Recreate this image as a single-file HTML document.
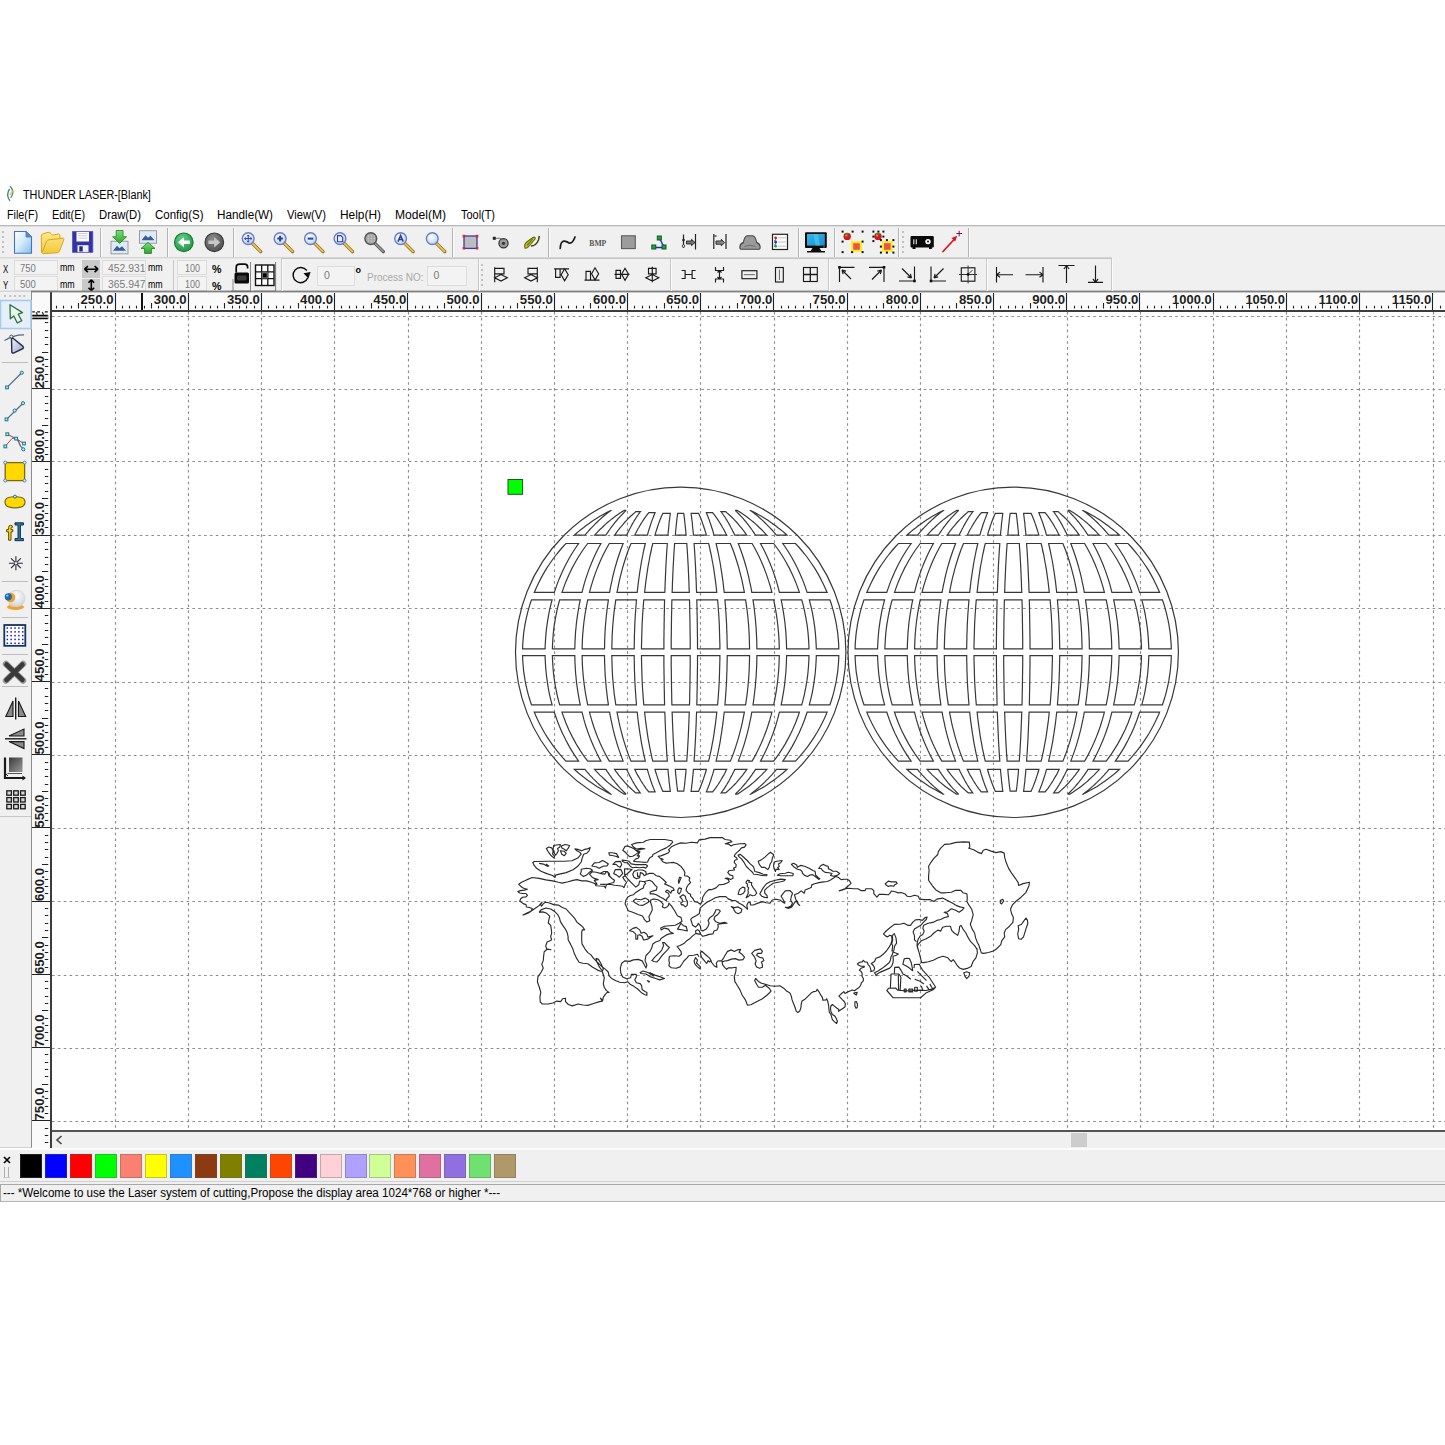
<!DOCTYPE html><html><head><meta charset="utf-8"><title>THUNDER LASER</title><style>
*{box-sizing:border-box;margin:0;padding:0}
html,body{width:1445px;height:1445px;background:#fff;overflow:hidden}
body{font-family:"Liberation Sans",sans-serif;font-size:12px;color:#000;position:relative}
.a{position:absolute}
.t{position:absolute;white-space:nowrap;line-height:1;transform-origin:0 50%}
.inp{position:absolute;background:#f3f3f3;border:1px solid #dcdcdc;color:#7a7a7a;font-size:11.5px;line-height:1;white-space:nowrap;overflow:hidden}
.sep{position:absolute;width:1px;background:#c9c9c9}
.hsep{position:absolute;height:1px;background:#c9c9c9}
svg{position:absolute;overflow:visible}
</style></head><body>
<div class="a" style="left:0;top:226px;width:1445px;height:66px;background:#f0f0f0"></div>
<div class="a" style="left:0;top:225px;width:1445px;height:1px;background:#b9b9b9"></div>
<div class="a" style="left:0;top:226px;width:1445px;height:1px;background:#dedede"></div>
<div class="a" style="left:0;top:291px;width:32px;height:857px;background:#f0f0f0;border-right:1px solid #8c8c8c;border-bottom:1px solid #d4d4d4"></div>
<div class="a" style="left:32px;top:292px;width:1413px;height:20px;background:#fafafa"></div>
<div class="a" style="left:32px;top:292px;width:19px;height:856px;background:#fafafa"></div>
<div class="a" style="left:50px;top:310px;width:1395px;height:2px;background:#3c3c3c"></div>
<div class="a" style="left:50px;top:292px;width:2px;height:856px;background:#3c3c3c"></div>
<div class="a" style="left:52px;top:1130px;width:1393px;height:2px;background:#555"></div>
<div class="a" style="left:52px;top:1132px;width:1393px;height:16px;background:#f0f0f0"></div><div class="a" style="left:0;top:1148px;width:1445px;height:1.5px;background:#fbfbfb"></div>
<div class="a" style="left:1071px;top:1133px;width:16px;height:14px;background:#cdcdcd"></div>
<svg style="left:55px;top:1135px" width="8" height="10"><path d="M6.5 1 L2 5 L6.5 9" fill="none" stroke="#444" stroke-width="1.6"/></svg>
<div class="a" style="left:0;top:1149.5px;width:1445px;height:34.5px;background:#f0f0f0"></div>
<div class="a" style="left:0;top:1181px;width:1445px;height:1px;background:#d0d0d0"></div>
<div class="a" style="left:0;top:1184px;width:1445px;height:18px;background:#f0f0f0;border-top:1px solid #a8a8a8;border-bottom:1px solid #b4b4b4;border-left:1px solid #a8a8a8"></div>
<div class="t" style="left:22.7px;top:188.7px;font-size:12px;color:#000;font-weight:normal;transform:scaleX(0.900);">THUNDER LASER-[Blank]</div>
<div class="t" style="left:7px;top:209.2px;font-size:12px;color:#000;font-weight:normal;transform:scaleX(0.895);">File(F)</div>
<div class="t" style="left:52px;top:209.2px;font-size:12px;color:#000;font-weight:normal;transform:scaleX(0.900);">Edit(E)</div>
<div class="t" style="left:99px;top:209.2px;font-size:12px;color:#000;font-weight:normal;transform:scaleX(0.940);">Draw(D)</div>
<div class="t" style="left:155px;top:209.2px;font-size:12px;color:#000;font-weight:normal;transform:scaleX(0.957);">Config(S)</div>
<div class="t" style="left:217px;top:209.2px;font-size:12px;color:#000;font-weight:normal;transform:scaleX(0.977);">Handle(W)</div>
<div class="t" style="left:287px;top:209.2px;font-size:12px;color:#000;font-weight:normal;transform:scaleX(0.933);">View(V)</div>
<div class="t" style="left:340px;top:209.2px;font-size:12px;color:#000;font-weight:normal;transform:scaleX(0.992);">Help(H)</div>
<div class="t" style="left:395px;top:209.2px;font-size:12px;color:#000;font-weight:normal;transform:scaleX(1.007);">Model(M)</div>
<div class="t" style="left:461px;top:209.2px;font-size:12px;color:#000;font-weight:normal;transform:scaleX(0.911);">Tool(T)</div>
<div class="t" style="left:2.5px;top:1187.2px;font-size:12px;color:#000;font-weight:normal;transform:scaleX(0.967);">--- *Welcome to use the Laser system of cutting,Propose the display area 1024*768 or higher *---</div>
<div class="a" style="left:20.0px;top:1154px;width:22px;height:23.5px;background:#000000;border:1px solid rgba(90,90,90,.35)"></div>
<div class="a" style="left:45.0px;top:1154px;width:22px;height:23.5px;background:#0000ff;border:1px solid rgba(90,90,90,.35)"></div>
<div class="a" style="left:69.9px;top:1154px;width:22px;height:23.5px;background:#ff0000;border:1px solid rgba(90,90,90,.35)"></div>
<div class="a" style="left:94.9px;top:1154px;width:22px;height:23.5px;background:#00ff00;border:1px solid rgba(90,90,90,.35)"></div>
<div class="a" style="left:119.8px;top:1154px;width:22px;height:23.5px;background:#fa8072;border:1px solid rgba(90,90,90,.35)"></div>
<div class="a" style="left:144.8px;top:1154px;width:22px;height:23.5px;background:#ffff00;border:1px solid rgba(90,90,90,.35)"></div>
<div class="a" style="left:169.8px;top:1154px;width:22px;height:23.5px;background:#1e90ff;border:1px solid rgba(90,90,90,.35)"></div>
<div class="a" style="left:194.7px;top:1154px;width:22px;height:23.5px;background:#8b3a12;border:1px solid rgba(90,90,90,.35)"></div>
<div class="a" style="left:219.7px;top:1154px;width:22px;height:23.5px;background:#808000;border:1px solid rgba(90,90,90,.35)"></div>
<div class="a" style="left:244.6px;top:1154px;width:22px;height:23.5px;background:#008060;border:1px solid rgba(90,90,90,.35)"></div>
<div class="a" style="left:269.6px;top:1154px;width:22px;height:23.5px;background:#ff4500;border:1px solid rgba(90,90,90,.35)"></div>
<div class="a" style="left:294.6px;top:1154px;width:22px;height:23.5px;background:#400080;border:1px solid rgba(90,90,90,.35)"></div>
<div class="a" style="left:319.5px;top:1154px;width:22px;height:23.5px;background:#ffd0d8;border:1px solid rgba(90,90,90,.35)"></div>
<div class="a" style="left:344.5px;top:1154px;width:22px;height:23.5px;background:#b0a0ff;border:1px solid rgba(90,90,90,.35)"></div>
<div class="a" style="left:369.4px;top:1154px;width:22px;height:23.5px;background:#d0ff98;border:1px solid rgba(90,90,90,.35)"></div>
<div class="a" style="left:394.4px;top:1154px;width:22px;height:23.5px;background:#ff9058;border:1px solid rgba(90,90,90,.35)"></div>
<div class="a" style="left:419.4px;top:1154px;width:22px;height:23.5px;background:#e070a0;border:1px solid rgba(90,90,90,.35)"></div>
<div class="a" style="left:444.3px;top:1154px;width:22px;height:23.5px;background:#9070e0;border:1px solid rgba(90,90,90,.35)"></div>
<div class="a" style="left:469.3px;top:1154px;width:22px;height:23.5px;background:#70e070;border:1px solid rgba(90,90,90,.35)"></div>
<div class="a" style="left:494.2px;top:1154px;width:22px;height:23.5px;background:#b09868;border:1px solid rgba(90,90,90,.35)"></div>
<svg style="left:3px;top:1156px" width="8" height="8"><path d="M1 1 L7 7 M7 1 L1 7" stroke="#000" stroke-width="1.7"/></svg>
<div class="a" style="left:4px;top:1167px;width:1px;height:10px;background:#b0b0b0"></div><div class="a" style="left:8px;top:1167px;width:1px;height:10px;background:#b0b0b0"></div><div class="a" style="left:3px;top:1177px;width:7px;height:1px;background:#c8c8c8"></div>
<div class="t" style="left:2.9px;top:264.2px;font-size:10.5px;color:#000;font-weight:normal;transform:scaleX(0.742);">X</div>
<div class="t" style="left:2.9px;top:279.5px;font-size:10.5px;color:#000;font-weight:normal;transform:scaleX(0.742);">Y</div>
<div class="inp" style="left:13.7px;top:260.2px;width:44.5px;height:15px"><div class="t" style="left:5.4px;top:1.9px;font-size:10.5px;transform:scaleX(0.902)">750</div></div>
<div class="inp" style="left:13.7px;top:276.2px;width:44.5px;height:15px"><div class="t" style="left:5.4px;top:2.2px;font-size:10.5px;transform:scaleX(0.902)">500</div></div>
<div class="t" style="left:59.6px;top:262.1px;font-size:10.5px;color:#000;font-weight:normal;transform:scaleX(0.840);">mm</div>
<div class="t" style="left:59.6px;top:278.7px;font-size:10.5px;color:#000;font-weight:normal;transform:scaleX(0.840);">mm</div>
<div class="a" style="left:82.3px;top:260.4px;width:17.4px;height:17.6px;background:#c9c9c9"></div>
<div class="a" style="left:82.3px;top:279px;width:17.4px;height:12.3px;background:#c9c9c9"></div>
<svg style="left:83px;top:260px" width="17" height="32"><path d="M1.5 9.2 H15 M1.5 9.2 l3.4 -3 M1.5 9.2 l3.4 3 M15 9.2 l-3.4 -3 M15 9.2 l-3.4 3" stroke="#000" stroke-width="1.6" fill="none"/><path d="M8.3 20 V30.5 M8.3 19.8 l-2.8 3 M8.3 19.8 l2.8 3 M8.3 30.8 l-2.8 -3 M8.3 30.8 l2.8 -3" stroke="#000" stroke-width="1.6" fill="none"/></svg>
<div class="inp" style="left:102.2px;top:260.2px;width:44px;height:15px"><div class="t" style="left:4.9px;top:1.9px;font-size:10.5px;transform:scaleX(0.985)">452.931</div></div>
<div class="inp" style="left:102.2px;top:276.2px;width:44px;height:15px"><div class="t" style="left:4.9px;top:2.2px;font-size:10.5px;transform:scaleX(0.985)">365.947</div></div>
<div class="t" style="left:147.8px;top:262.1px;font-size:10.5px;color:#000;font-weight:normal;transform:scaleX(0.840);">mm</div>
<div class="t" style="left:147.8px;top:278.7px;font-size:10.5px;color:#000;font-weight:normal;transform:scaleX(0.840);">mm</div>
<div class="sep" style="left:173px;top:260px;height:30px"></div>
<div class="inp" style="left:177px;top:260.2px;width:30px;height:15px"><div class="t" style="left:6.6px;top:1.9px;font-size:10.5px;transform:scaleX(0.856)">100</div></div>
<div class="inp" style="left:177px;top:276.2px;width:30px;height:15px"><div class="t" style="left:6.6px;top:2.2px;font-size:10.5px;transform:scaleX(0.856)">100</div></div>
<div class="t" style="left:212.3px;top:264.3px;font-size:11px;color:#000;font-weight:bold;transform:scaleX(0.971);">%</div>
<div class="t" style="left:212.3px;top:280.5px;font-size:11px;color:#000;font-weight:bold;transform:scaleX(0.971);">%</div>
<div class="inp" style="left:317px;top:265.5px;width:38px;height:20px"><div class="t" style="left:6px;top:3.4px;font-size:10.5px;transform:scaleX(1.000)">0</div></div>
<div class="t" style="left:355.5px;top:265.7px;font-size:9px;color:#000;font-weight:bold;transform:scaleX(1.000);">o</div>
<div class="t" style="left:367px;top:271.7px;font-size:11px;color:#a8a8a8;font-weight:normal;transform:scaleX(0.906);">Process NO:</div>
<div class="inp" style="left:426.5px;top:265.5px;width:40px;height:20px"><div class="t" style="left:6px;top:3.4px;font-size:10.5px;transform:scaleX(1.000)">0</div></div>
<svg style="left:0;top:180px" width="20" height="30"><path d="M9.6 9 Q5.6 14.5 9.9 20.8" fill="none" stroke="#3f7f86" stroke-width="1.3"/><path d="M10.2 6.3 Q15.4 12 10.6 17.8" fill="none" stroke="#4a86a8" stroke-width="1.3"/><path d="M9 14.3 L12 10.4 L15.6 10.8 L12.6 12.6 L11 15.5 Z" fill="#d9cc3a" opacity=".85"/></svg>
<svg style="left:0;top:0" width="1445" height="1445" viewBox="0 0 1445 1445"><path d="M115.5 312V1130M188.5 312V1130M261.5 312V1130M334.5 312V1130M408.5 312V1130M481.5 312V1130M554.5 312V1130M627.5 312V1130M700.5 312V1130M774.5 312V1130M847.5 312V1130M920.5 312V1130M993.5 312V1130M1067.5 312V1130M1140.5 312V1130M1213.5 312V1130M1286.5 312V1130M1359.5 312V1130M1433.5 312V1130M52 316.5H1445M52 389.5H1445M52 461.5H1445M52 535.5H1445M52 608.5H1445M52 682.5H1445M52 755.5H1445M52 828.5H1445M52 901.5H1445M52 975.5H1445M52 1048.5H1445M52 1121.5H1445" stroke="#8c8c8c" stroke-width="1.15" stroke-dasharray="2.6 3.25" fill="none"/><path d="M56.5 305.8V308.6M63.5 305.8V308.6M71.5 305.8V308.6M78.5 303V308.6M85.5 305.8V308.6M93.5 305.8V308.6M100.5 305.8V308.6M107.5 305.8V308.6M115.5 293V310M122.5 305.8V308.6M129.5 305.8V308.6M136.5 305.8V308.6M144.5 305.8V308.6M151.5 303V308.6M158.5 305.8V308.6M166.5 305.8V308.6M173.5 305.8V308.6M180.5 305.8V308.6M188.5 293V310M195.5 305.8V308.6M202.5 305.8V308.6M210.5 305.8V308.6M217.5 305.8V308.6M224.5 303V308.6M232.5 305.8V308.6M239.5 305.8V308.6M246.5 305.8V308.6M254.5 305.8V308.6M261.5 293V310M268.5 305.8V308.6M276.5 305.8V308.6M283.5 305.8V308.6M290.5 305.8V308.6M298.5 303V308.6M305.5 305.8V308.6M312.5 305.8V308.6M319.5 305.8V308.6M327.5 305.8V308.6M334.5 293V310M341.5 305.8V308.6M349.5 305.8V308.6M356.5 305.8V308.6M363.5 305.8V308.6M371.5 303V308.6M378.5 305.8V308.6M385.5 305.8V308.6M393.5 305.8V308.6M400.5 305.8V308.6M407.5 293V310M415.5 305.8V308.6M422.5 305.8V308.6M429.5 305.8V308.6M437.5 305.8V308.6M444.5 303V308.6M451.5 305.8V308.6M459.5 305.8V308.6M466.5 305.8V308.6M473.5 305.8V308.6M481.5 293V310M488.5 305.8V308.6M495.5 305.8V308.6M503.5 305.8V308.6M510.5 305.8V308.6M517.5 303V308.6M524.5 305.8V308.6M532.5 305.8V308.6M539.5 305.8V308.6M546.5 305.8V308.6M554.5 293V310M561.5 305.8V308.6M568.5 305.8V308.6M576.5 305.8V308.6M583.5 305.8V308.6M590.5 303V308.6M598.5 305.8V308.6M605.5 305.8V308.6M612.5 305.8V308.6M620.5 305.8V308.6M627.5 293V310M634.5 305.8V308.6M642.5 305.8V308.6M649.5 305.8V308.6M656.5 305.8V308.6M664.5 303V308.6M671.5 305.8V308.6M678.5 305.8V308.6M686.5 305.8V308.6M693.5 305.8V308.6M700.5 293V310M708.5 305.8V308.6M715.5 305.8V308.6M722.5 305.8V308.6M729.5 305.8V308.6M737.5 303V308.6M744.5 305.8V308.6M751.5 305.8V308.6M759.5 305.8V308.6M766.5 305.8V308.6M773.5 293V310M781.5 305.8V308.6M788.5 305.8V308.6M795.5 305.8V308.6M803.5 305.8V308.6M810.5 303V308.6M817.5 305.8V308.6M825.5 305.8V308.6M832.5 305.8V308.6M839.5 305.8V308.6M847.5 293V310M854.5 305.8V308.6M861.5 305.8V308.6M869.5 305.8V308.6M876.5 305.8V308.6M883.5 303V308.6M891.5 305.8V308.6M898.5 305.8V308.6M905.5 305.8V308.6M912.5 305.8V308.6M920.5 293V310M927.5 305.8V308.6M934.5 305.8V308.6M942.5 305.8V308.6M949.5 305.8V308.6M956.5 303V308.6M964.5 305.8V308.6M971.5 305.8V308.6M978.5 305.8V308.6M986.5 305.8V308.6M993.5 293V310M1000.5 305.8V308.6M1008.5 305.8V308.6M1015.5 305.8V308.6M1022.5 305.8V308.6M1030.5 303V308.6M1037.5 305.8V308.6M1044.5 305.8V308.6M1052.5 305.8V308.6M1059.5 305.8V308.6M1066.5 293V310M1074.5 305.8V308.6M1081.5 305.8V308.6M1088.5 305.8V308.6M1096.5 305.8V308.6M1103.5 303V308.6M1110.5 305.8V308.6M1117.5 305.8V308.6M1125.5 305.8V308.6M1132.5 305.8V308.6M1139.5 293V310M1147.5 305.8V308.6M1154.5 305.8V308.6M1161.5 305.8V308.6M1169.5 305.8V308.6M1176.5 303V308.6M1183.5 305.8V308.6M1191.5 305.8V308.6M1198.5 305.8V308.6M1205.5 305.8V308.6M1213.5 293V310M1220.5 305.8V308.6M1227.5 305.8V308.6M1235.5 305.8V308.6M1242.5 305.8V308.6M1249.5 303V308.6M1257.5 305.8V308.6M1264.5 305.8V308.6M1271.5 305.8V308.6M1279.5 305.8V308.6M1286.5 293V310M1293.5 305.8V308.6M1301.5 305.8V308.6M1308.5 305.8V308.6M1315.5 305.8V308.6M1322.5 303V308.6M1330.5 305.8V308.6M1337.5 305.8V308.6M1344.5 305.8V308.6M1352.5 305.8V308.6M1359.5 293V310M1366.5 305.8V308.6M1374.5 305.8V308.6M1381.5 305.8V308.6M1388.5 305.8V308.6M1396.5 303V308.6M1403.5 305.8V308.6M1410.5 305.8V308.6M1418.5 305.8V308.6M1425.5 305.8V308.6M1432.5 293V310M1440.5 305.8V308.6" stroke="#222" stroke-width="1.1" fill="none"/><path d="M44.8 322.5H48.2M44.8 330.5H48.2M44.8 337.5H48.2M44.8 344.5H48.2M42 352.5H48.2M44.8 359.5H48.2M44.8 366.5H48.2M44.8 374.5H48.2M44.8 381.5H48.2M32 388.5H50M44.8 396.5H48.2M44.8 403.5H48.2M44.8 410.5H48.2M44.8 418.5H48.2M42 425.5H48.2M44.8 432.5H48.2M44.8 440.5H48.2M44.8 447.5H48.2M44.8 454.5H48.2M32 461.5H50M44.8 469.5H48.2M44.8 476.5H48.2M44.8 483.5H48.2M44.8 491.5H48.2M42 498.5H48.2M44.8 505.5H48.2M44.8 513.5H48.2M44.8 520.5H48.2M44.8 527.5H48.2M32 535.5H50M44.8 542.5H48.2M44.8 549.5H48.2M44.8 557.5H48.2M44.8 564.5H48.2M42 571.5H48.2M44.8 579.5H48.2M44.8 586.5H48.2M44.8 593.5H48.2M44.8 601.5H48.2M32 608.5H50M44.8 615.5H48.2M44.8 623.5H48.2M44.8 630.5H48.2M44.8 637.5H48.2M42 644.5H48.2M44.8 652.5H48.2M44.8 659.5H48.2M44.8 666.5H48.2M44.8 674.5H48.2M32 681.5H50M44.8 688.5H48.2M44.8 696.5H48.2M44.8 703.5H48.2M44.8 710.5H48.2M42 718.5H48.2M44.8 725.5H48.2M44.8 732.5H48.2M44.8 740.5H48.2M44.8 747.5H48.2M32 754.5H50M44.8 762.5H48.2M44.8 769.5H48.2M44.8 776.5H48.2M44.8 784.5H48.2M42 791.5H48.2M44.8 798.5H48.2M44.8 805.5H48.2M44.8 813.5H48.2M44.8 820.5H48.2M32 827.5H50M44.8 835.5H48.2M44.8 842.5H48.2M44.8 849.5H48.2M44.8 857.5H48.2M42 864.5H48.2M44.8 871.5H48.2M44.8 879.5H48.2M44.8 886.5H48.2M44.8 893.5H48.2M32 901.5H50M44.8 908.5H48.2M44.8 915.5H48.2M44.8 923.5H48.2M44.8 930.5H48.2M42 937.5H48.2M44.8 945.5H48.2M44.8 952.5H48.2M44.8 959.5H48.2M44.8 967.5H48.2M32 974.5H50M44.8 981.5H48.2M44.8 988.5H48.2M44.8 996.5H48.2M44.8 1003.5H48.2M42 1010.5H48.2M44.8 1018.5H48.2M44.8 1025.5H48.2M44.8 1032.5H48.2M44.8 1040.5H48.2M32 1047.5H50M44.8 1054.5H48.2M44.8 1062.5H48.2M44.8 1069.5H48.2M44.8 1076.5H48.2M42 1084.5H48.2M44.8 1091.5H48.2M44.8 1098.5H48.2M44.8 1106.5H48.2M44.8 1113.5H48.2M32 1120.5H50M44.8 1128.5H48.2M44.8 1135.5H48.2M44.8 1142.5H48.2" stroke="#222" stroke-width="1.1" fill="none"/><path d="M142 293V310" stroke="#111" stroke-width="2"/><rect x="32.3" y="315.2" width="16.3" height="3.8" fill="#a0a0a0"/><path d="M32.3 311.8H34.8M37.2 311.8H40M44.8 311.8H47.8" stroke="#111" stroke-width="1.2"/><path d="M36.2 312.3L37.3 314.8M42.2 312L43.6 314.8" stroke="#333" stroke-width="1.3"/><path d="M32.3 315.5H47.8M32.3 318.6H47.8" stroke="#0a0a0a" stroke-width="1.3"/><text x="113.5" y="304.3" text-anchor="end" font-family="Liberation Sans" font-weight="bold" font-size="12.4" fill="#1e1e1e" textLength="33" lengthAdjust="spacingAndGlyphs">250.0</text><text x="186.7" y="304.3" text-anchor="end" font-family="Liberation Sans" font-weight="bold" font-size="12.4" fill="#1e1e1e" textLength="33" lengthAdjust="spacingAndGlyphs">300.0</text><text x="259.9" y="304.3" text-anchor="end" font-family="Liberation Sans" font-weight="bold" font-size="12.4" fill="#1e1e1e" textLength="33" lengthAdjust="spacingAndGlyphs">350.0</text><text x="333.1" y="304.3" text-anchor="end" font-family="Liberation Sans" font-weight="bold" font-size="12.4" fill="#1e1e1e" textLength="33" lengthAdjust="spacingAndGlyphs">400.0</text><text x="406.3" y="304.3" text-anchor="end" font-family="Liberation Sans" font-weight="bold" font-size="12.4" fill="#1e1e1e" textLength="33" lengthAdjust="spacingAndGlyphs">450.0</text><text x="479.5" y="304.3" text-anchor="end" font-family="Liberation Sans" font-weight="bold" font-size="12.4" fill="#1e1e1e" textLength="33" lengthAdjust="spacingAndGlyphs">500.0</text><text x="552.8" y="304.3" text-anchor="end" font-family="Liberation Sans" font-weight="bold" font-size="12.4" fill="#1e1e1e" textLength="33" lengthAdjust="spacingAndGlyphs">550.0</text><text x="626.0" y="304.3" text-anchor="end" font-family="Liberation Sans" font-weight="bold" font-size="12.4" fill="#1e1e1e" textLength="33" lengthAdjust="spacingAndGlyphs">600.0</text><text x="699.2" y="304.3" text-anchor="end" font-family="Liberation Sans" font-weight="bold" font-size="12.4" fill="#1e1e1e" textLength="33" lengthAdjust="spacingAndGlyphs">650.0</text><text x="772.4" y="304.3" text-anchor="end" font-family="Liberation Sans" font-weight="bold" font-size="12.4" fill="#1e1e1e" textLength="33" lengthAdjust="spacingAndGlyphs">700.0</text><text x="845.6" y="304.3" text-anchor="end" font-family="Liberation Sans" font-weight="bold" font-size="12.4" fill="#1e1e1e" textLength="33" lengthAdjust="spacingAndGlyphs">750.0</text><text x="918.8" y="304.3" text-anchor="end" font-family="Liberation Sans" font-weight="bold" font-size="12.4" fill="#1e1e1e" textLength="33" lengthAdjust="spacingAndGlyphs">800.0</text><text x="992.0" y="304.3" text-anchor="end" font-family="Liberation Sans" font-weight="bold" font-size="12.4" fill="#1e1e1e" textLength="33" lengthAdjust="spacingAndGlyphs">850.0</text><text x="1065.2" y="304.3" text-anchor="end" font-family="Liberation Sans" font-weight="bold" font-size="12.4" fill="#1e1e1e" textLength="33" lengthAdjust="spacingAndGlyphs">900.0</text><text x="1138.4" y="304.3" text-anchor="end" font-family="Liberation Sans" font-weight="bold" font-size="12.4" fill="#1e1e1e" textLength="33" lengthAdjust="spacingAndGlyphs">950.0</text><text x="1211.6" y="304.3" text-anchor="end" font-family="Liberation Sans" font-weight="bold" font-size="12.4" fill="#1e1e1e" textLength="39.5" lengthAdjust="spacingAndGlyphs">1000.0</text><text x="1284.9" y="304.3" text-anchor="end" font-family="Liberation Sans" font-weight="bold" font-size="12.4" fill="#1e1e1e" textLength="39.5" lengthAdjust="spacingAndGlyphs">1050.0</text><text x="1358.1" y="304.3" text-anchor="end" font-family="Liberation Sans" font-weight="bold" font-size="12.4" fill="#1e1e1e" textLength="39.5" lengthAdjust="spacingAndGlyphs">1100.0</text><text x="1431.3" y="304.3" text-anchor="end" font-family="Liberation Sans" font-weight="bold" font-size="12.4" fill="#1e1e1e" textLength="39.5" lengthAdjust="spacingAndGlyphs">1150.0</text><text transform="translate(43.6 388.6) rotate(-90)" text-anchor="start" font-family="Liberation Sans" font-weight="bold" font-size="12.4" fill="#1e1e1e" textLength="33" lengthAdjust="spacingAndGlyphs">250.0</text><text transform="translate(43.6 461.8) rotate(-90)" text-anchor="start" font-family="Liberation Sans" font-weight="bold" font-size="12.4" fill="#1e1e1e" textLength="33" lengthAdjust="spacingAndGlyphs">300.0</text><text transform="translate(43.6 535.0) rotate(-90)" text-anchor="start" font-family="Liberation Sans" font-weight="bold" font-size="12.4" fill="#1e1e1e" textLength="33" lengthAdjust="spacingAndGlyphs">350.0</text><text transform="translate(43.6 608.2) rotate(-90)" text-anchor="start" font-family="Liberation Sans" font-weight="bold" font-size="12.4" fill="#1e1e1e" textLength="33" lengthAdjust="spacingAndGlyphs">400.0</text><text transform="translate(43.6 681.4) rotate(-90)" text-anchor="start" font-family="Liberation Sans" font-weight="bold" font-size="12.4" fill="#1e1e1e" textLength="33" lengthAdjust="spacingAndGlyphs">450.0</text><text transform="translate(43.6 754.5) rotate(-90)" text-anchor="start" font-family="Liberation Sans" font-weight="bold" font-size="12.4" fill="#1e1e1e" textLength="33" lengthAdjust="spacingAndGlyphs">500.0</text><text transform="translate(43.6 827.7) rotate(-90)" text-anchor="start" font-family="Liberation Sans" font-weight="bold" font-size="12.4" fill="#1e1e1e" textLength="33" lengthAdjust="spacingAndGlyphs">550.0</text><text transform="translate(43.6 900.9) rotate(-90)" text-anchor="start" font-family="Liberation Sans" font-weight="bold" font-size="12.4" fill="#1e1e1e" textLength="33" lengthAdjust="spacingAndGlyphs">600.0</text><text transform="translate(43.6 974.1) rotate(-90)" text-anchor="start" font-family="Liberation Sans" font-weight="bold" font-size="12.4" fill="#1e1e1e" textLength="33" lengthAdjust="spacingAndGlyphs">650.0</text><text transform="translate(43.6 1047.3) rotate(-90)" text-anchor="start" font-family="Liberation Sans" font-weight="bold" font-size="12.4" fill="#1e1e1e" textLength="33" lengthAdjust="spacingAndGlyphs">700.0</text><text transform="translate(43.6 1120.5) rotate(-90)" text-anchor="start" font-family="Liberation Sans" font-weight="bold" font-size="12.4" fill="#1e1e1e" textLength="33" lengthAdjust="spacingAndGlyphs">750.0</text></svg>
<svg style="left:0;top:0" width="1445" height="1445" viewBox="0 0 1445 1445"><defs>
<linearGradient id="gdoc" x1="0" y1="0" x2="1" y2="1"><stop offset="0" stop-color="#ffffff"/><stop offset=".45" stop-color="#d8ecfa"/><stop offset="1" stop-color="#7fc0ee"/></linearGradient>
<linearGradient id="gfol" x1="0" y1="0" x2="0" y2="1"><stop offset="0" stop-color="#fde98a"/><stop offset="1" stop-color="#f3c93a"/></linearGradient>
<linearGradient id="ggrn" x1="0" y1="0" x2="0" y2="1"><stop offset="0" stop-color="#7be07b"/><stop offset="1" stop-color="#2ea32e"/></linearGradient>
<radialGradient id="gback" cx=".4" cy=".3" r=".8"><stop offset="0" stop-color="#5fd08a"/><stop offset="1" stop-color="#1f8f3f"/></radialGradient>
<radialGradient id="gfwd" cx=".4" cy=".3" r=".8"><stop offset="0" stop-color="#8a8a8a"/><stop offset="1" stop-color="#4a4a4a"/></radialGradient>
<radialGradient id="glens" cx=".4" cy=".35" r=".7"><stop offset="0" stop-color="#ffffff"/><stop offset="1" stop-color="#b9d3f2"/></radialGradient>
<linearGradient id="gmon" x1="0" y1="0" x2="1" y2="1"><stop offset="0" stop-color="#35b6e8"/><stop offset="1" stop-color="#1590d0"/></linearGradient>
<g id="mag"><path d="M4 4.5 L12.5 13" stroke="#8a6a2a" stroke-width="3.4" stroke-linecap="round"/><path d="M4.5 5 L12.3 12.8" stroke="#f0c24c" stroke-width="2" stroke-linecap="round"/><circle cx="0" cy="0" r="5.9" fill="url(#glens)" stroke="#6a7ec8" stroke-width="1.4"/></g>
<g id="pic"><rect x="0.5" y="0.5" width="17" height="12.5" fill="#dfeaf8" stroke="#9a9a9a" stroke-width="1"/><path d="M2.5 10 L6.5 5 L9 7.5 L11.5 5.5 L15.5 10 Z" fill="#3a5a96"/></g>
</defs><rect x="0" y="257" width="1112" height="1" fill="#d6d6d6"/><rect x="281" y="258" width="831" height="1" fill="#c4c4c4"/><rect x="0" y="258" width="281" height="1" fill="#e6e6e6"/><rect x="0" y="290.6" width="31" height="1.4" fill="#d4d4d4"/><rect x="31" y="290.6" width="1414" height="1.8" fill="#808080"/><rect x="2" y="231" width="2" height="2" fill="#c2c2c2"/><rect x="2" y="236" width="2" height="2" fill="#c2c2c2"/><rect x="2" y="241" width="2" height="2" fill="#c2c2c2"/><rect x="2" y="246" width="2" height="2" fill="#c2c2c2"/><rect x="2" y="251" width="2" height="2" fill="#c2c2c2"/><path d="M14.5 231.5 H26 L31.5 237 V253.3 H14.5 Z" fill="url(#gdoc)" stroke="#4a74ba" stroke-width="1.1"/><path d="M26 231.5 V237 H31.5 Z" fill="#5a8ad0" stroke="#4a74ba" stroke-width=".8"/><path d="M41.5 252.5 L41.3 236 Q41.3 234 43.5 233.6 L48 232.4 Q50 232 51 233.5 L52.5 235.2 L58.5 234 Q60 234 60 236 V238.5 L63.3 238 Q64.3 238.3 63.8 239.8 L59.5 251 Q59 252.6 57 252.8 L43.5 253.6 Q41.8 253.6 41.5 252.5 Z" fill="url(#gfol)" stroke="#d9a520" stroke-width="1"/><path d="M42.3 252 L46.5 241.5 Q47 240 49 239.8 L60 238.6" fill="none" stroke="#d9a520" stroke-width="1"/><path d="M72.5 231.5 H92.8 V252.4 H72.5 Z" fill="#3434a6"/><rect x="76.5" y="231" width="12.5" height="10.5" fill="#fdfdfd"/><path d="M78 233.5H87.5M78 235.8H87.5M78 238.2H87.5" stroke="#c8c8d8" stroke-width=".9"/><rect x="77.5" y="245.2" width="11" height="7.5" fill="#f0f0f8"/><rect x="79.3" y="246.3" width="3.4" height="5.2" fill="#26267a"/><path d="M72.5 231.5 H92.8 V252.4 H72.5 Z" fill="none" stroke="#5050b8" stroke-width=".8"/><rect x="100" y="228" width="1" height="29" fill="#b4b4b4"/><rect x="101" y="228" width="1" height="29" fill="#fafafa"/><use href="#pic" x="110.5" y="240.8"/><path d="M116.2 230.5 H123 V236.8 H126.6 L119.6 243.3 L112.6 236.8 H116.2 Z" fill="url(#ggrn)" stroke="#2a8a2a" stroke-width=".9"/><use href="#pic" x="139" y="230.2"/><path d="M144.6 253.5 H151.4 V248.5 H155 L148 242.3 L141 248.5 H144.6 Z" fill="url(#ggrn)" stroke="#2a8a2a" stroke-width=".9"/><rect x="167" y="228" width="1" height="29" fill="#b4b4b4"/><rect x="168" y="228" width="1" height="29" fill="#fafafa"/><circle cx="183.8" cy="242.3" r="9.3" fill="url(#gback)" stroke="#1c7a34" stroke-width="1.2"/><path d="M178 242.3 L184 237.2 V240.6 H189.8 V244 H184 V247.4 Z" fill="#fff"/><circle cx="214.3" cy="242.3" r="9.3" fill="url(#gfwd)" stroke="#3c3c3c" stroke-width="1.2"/><path d="M220.2 242.3 L214.2 237.2 V240.6 H208.4 V244 H214.2 V247.4 Z" fill="#c8c8c8"/><rect x="233" y="228" width="1" height="29" fill="#b4b4b4"/><rect x="234" y="228" width="1" height="29" fill="#fafafa"/><use href="#mag" x="248.2" y="238.6"/><use href="#mag" x="280.1" y="238.6"/><use href="#mag" x="310.5" y="238.6"/><use href="#mag" x="340" y="238.6"/><g transform="translate(370.8 238.6)"><path d="M4 4.5 L12.5 13" stroke="#555" stroke-width="3.4" stroke-linecap="round"/><path d="M4.5 5 L12.3 12.8" stroke="#999" stroke-width="1.6" stroke-linecap="round"/><circle r="5.9" fill="#a8a8a8" stroke="#555" stroke-width="1.5"/><path d="M-3 -2.5h1M0 -2.5h1M3 -2.5h1M-3 0h1M0 0h1M3 0h1M-3 2.5h1M0 2.5h1M3 2.5h1" stroke="#e0e0e0" stroke-width="1"/></g><use href="#mag" x="400.6" y="238.6"/><use href="#mag" x="432.3" y="238.6"/><path d="M244.6 238.6H251.79999999999998M248.2 235V242.2M244.6 238.6l1.4 -1.2m-1.4 1.2l1.4 1.2M251.79999999999998 238.6l-1.4 -1.2m1.4 1.2l-1.4 1.2M248.2 235l-1.2 1.4m1.2 -1.4l1.2 1.4M248.2 242.2l-1.2 -1.4m1.2 1.4l1.2 -1.4" stroke="#2c3ca0" stroke-width="1" fill="none"/><path d="M277.3 238.6H282.90000000000003M280.1 235.8V241.4" stroke="#2c3ca0" stroke-width="2"/><path d="M307.7 238.6H313.3" stroke="#2c3ca0" stroke-width="2"/><path d="M337.5 235.6H341L342.7 237.4V241.8H337.5Z" fill="#e8f0ff" stroke="#2c3ca0" stroke-width="1.1"/><path d="M398.0 241.6L400.6 235.4L403.20000000000005 241.6M399.0 239.6H402.20000000000005" fill="none" stroke="#2c3ca0" stroke-width="1.5"/><rect x="452" y="228" width="1" height="29" fill="#b4b4b4"/><rect x="453" y="228" width="1" height="29" fill="#fafafa"/><rect x="464" y="236" width="13" height="12.4" fill="#bdbdbd" stroke="#3a3aa8" stroke-width="1.3"/><path d="M462.6 234.8h2.6v2.6h-2.6zM475.8 234.8h2.6v2.6h-2.6zM462.6 247h2.6v2.6h-2.6zM475.8 247h2.6v2.6h-2.6z" fill="#e02020" opacity=".85"/><circle cx="503.5" cy="243.3" r="4.6" fill="#9a9a9a" stroke="#333" stroke-width="1.2"/><circle cx="503.5" cy="243.3" r="1.6" fill="#333"/><rect x="492.8" y="236.8" width="3" height="3" fill="#222"/><path d="M495.5 238.5 Q500 237.5 502 239" fill="none" stroke="#555" stroke-width=".8"/><path d="M525 248 Q523.5 244 528 241 L533 237.5 Q535 236.5 535.3 238.5 L530 245 Q527 249 525 248Z" fill="#d8c020" stroke="#5a6a10" stroke-width="1.1"/><path d="M531 246 Q536 246 538.5 240 L539.3 236" fill="none" stroke="#3a4a10" stroke-width="1.5"/><path d="M527 245.5 L532.5 239" stroke="#6a8a1a" stroke-width="1.4"/><rect x="548" y="228" width="1" height="29" fill="#b4b4b4"/><rect x="549" y="228" width="1" height="29" fill="#fafafa"/><path d="M560.2 248.5 Q560.5 241 564.5 241.2 Q567.5 241.8 569 243 Q572.5 244 575 237" fill="none" stroke="#1a1a1a" stroke-width="1.7" stroke-linecap="round"/><text x="589.3" y="246.2" font-family="Liberation Serif" font-weight="bold" font-size="9" fill="#555" textLength="17" lengthAdjust="spacingAndGlyphs">BMP</text><rect x="621.5" y="235.8" width="13.8" height="12.8" fill="#9c9c9c" stroke="#5c5c5c" stroke-width="1.1"/><path d="M655 247.5H664M659.3 238L663.8 246.5" stroke="#2020d0" stroke-width="1.4" fill="none"/><g fill="#20a040" stroke="#0a5a20" stroke-width="1"><rect x="657.3" y="236" width="4" height="4"/><rect x="651.8" y="245" width="4" height="4"/><rect x="662" y="245" width="4" height="4"/></g><path d="M683.5 234.5V248M695.5 234V249.5" stroke="#222" stroke-width="1.2"/><circle cx="683.5" cy="240" r="1.3" fill="#222"/><circle cx="683.5" cy="246" r="1.3" fill="#fff" stroke="#222" stroke-width=".8"/><path d="M686.5 241H691.5V239.3L695 242.5L691.5 245.7V244H686.5Z" fill="#777" stroke="#222" stroke-width=".9"/><path d="M713.8 234V249M726 234V249" stroke="#222" stroke-width="1.2"/><path d="M716 241H721.3V239.3L724.6 242.6L721.3 245.9V244.2H716Z" fill="#888" stroke="#222" stroke-width=".9"/><path d="M714.5 235l2 2m0 -2l-2 2" stroke="#222" stroke-width=".7"/><path d="M741 249.2 Q739.6 249 739.9 246.6 Q740.3 243.3 743.3 242.6 Q744.5 236.2 747.5 235.8 H752.5 Q755.5 236.2 756.7 242.6 Q759.7 243.3 760.1 246.6 Q760.4 249 759 249.2 Z" fill="#9a9a9a" stroke="#444" stroke-width="1.1"/><path d="M744.5 246.5 Q750 244 755.5 246.5" fill="none" stroke="#666" stroke-width=".9"/><rect x="772.5" y="234.3" width="15" height="15.2" fill="#fcfcfc" stroke="#222" stroke-width="1.2"/><circle cx="775.6" cy="237.8" r="1.4" fill="#d02020"/><circle cx="775.6" cy="242" r="1.4" fill="#2030c0"/><circle cx="775.6" cy="246.2" r="1.4" fill="#20a040"/><path d="M778 237.8H786M778 242H786M778 246.2H786" stroke="#bbb" stroke-width=".9"/><path d="M774.5 241l2 -2.5M774.5 245.2l2 -2.5" stroke="#222" stroke-width=".7"/><rect x="798" y="228" width="1" height="29" fill="#b4b4b4"/><rect x="799" y="228" width="1" height="29" fill="#fafafa"/><rect x="805" y="232.2" width="21.8" height="15.8" rx="1" fill="#0a0a0a"/><rect x="807" y="234" width="17.8" height="11.6" fill="url(#gmon)"/><path d="M813.5 234 L818 234 L820 245.6 L815.5 245.6Z" fill="#5cc8f0" opacity=".6"/><path d="M812.5 248H819.5L821.5 251H825V252.6H807V251H810.5Z" fill="#0a0a0a"/><rect x="823" y="246.4" width="2" height="1" fill="#e03030"/><rect x="834" y="228" width="1" height="29" fill="#b4b4b4"/><rect x="835" y="228" width="1" height="29" fill="#fafafa"/><rect x="851" y="241" width="11" height="11" fill="#f8f020"/><rect x="853.2" y="243.2" width="6.6" height="6.6" fill="#f05050"/><circle cx="847.2" cy="236.4" r="3.7" fill="#d01818"/><circle cx="846.3" cy="235.4" r="1.2" fill="#f07070"/><path d="M844 233.5 L850.5 233 L847 235Z" fill="#30a030"/><rect x="841.6" y="230.6" width="2" height="2" fill="#111"/><rect x="851.6" y="230.6" width="2" height="2" fill="#111"/><rect x="861.6" y="230.6" width="2" height="2" fill="#111"/><rect x="841.6" y="240.6" width="2" height="2" fill="#111"/><rect x="841.6" y="251.1" width="2" height="2" fill="#111"/><rect x="851.1" y="251.1" width="2" height="2" fill="#111"/><rect x="861.6" y="251.1" width="2" height="2" fill="#111"/><rect x="861.6" y="240.6" width="2" height="2" fill="#111"/><rect x="881.8" y="241" width="11" height="11" fill="#f8f020"/><rect x="884.0" y="243.2" width="6.6" height="6.6" fill="#f05050"/><circle cx="878.0" cy="236.4" r="3.7" fill="#d01818"/><circle cx="877.0999999999999" cy="235.4" r="1.2" fill="#f07070"/><path d="M874.8 233.5 L881.3 233 L877.8 235Z" fill="#30a030"/><rect x="872.4" y="230.6" width="2" height="2" fill="#111"/><rect x="877.4" y="230.6" width="2" height="2" fill="#111"/><rect x="882.4" y="230.6" width="2" height="2" fill="#111"/><rect x="872.4" y="235.6" width="2" height="2" fill="#111"/><rect x="872.4" y="240.1" width="2" height="2" fill="#111"/><rect x="882.4" y="235.6" width="2" height="2" fill="#111"/><rect x="879.9" y="239.1" width="2" height="2" fill="#111"/><rect x="885.9" y="239.1" width="2" height="2" fill="#111"/><rect x="892.4" y="239.1" width="2" height="2" fill="#111"/><rect x="879.9" y="245.6" width="2" height="2" fill="#111"/><rect x="879.9" y="251.6" width="2" height="2" fill="#111"/><rect x="885.9" y="251.6" width="2" height="2" fill="#111"/><rect x="892.4" y="251.6" width="2" height="2" fill="#111"/><rect x="892.4" y="245.6" width="2" height="2" fill="#111"/><rect x="898" y="228" width="1" height="29" fill="#b4b4b4"/><rect x="899" y="228" width="1" height="29" fill="#fafafa"/><rect x="902" y="231" width="2" height="2" fill="#c2c2c2"/><rect x="902" y="236" width="2" height="2" fill="#c2c2c2"/><rect x="902" y="241" width="2" height="2" fill="#c2c2c2"/><rect x="902" y="246" width="2" height="2" fill="#c2c2c2"/><rect x="902" y="251" width="2" height="2" fill="#c2c2c2"/><path d="M910.5 237 Q910.5 236 911.5 236 H932.5 Q933.8 236 933.8 237.2 V246.8 Q933.8 247.6 932.8 247.6 H931.8 V249 H929 V247.6 H915.5 V249 H912.5 V247.6 H911.5 Q910.5 247.6 910.5 246.6Z" fill="#0a0a0a"/><circle cx="928" cy="241.6" r="2.7" fill="#fff"/><circle cx="928" cy="241.6" r="1" fill="#0a0a0a"/><path d="M913.8 239.3V244.3M916.3 239.3V244.3" stroke="#e8e8e8" stroke-width="1.1"/><path d="M943 251.5 L955 238.5" stroke="#d81820" stroke-width="1.8" stroke-linecap="round"/><path d="M957.2 235.8 L951.5 238 L955.2 241.5Z" fill="#d81820"/><path d="M956.5 233.5H962M959.2 230.8V236.3" stroke="#701060" stroke-width="1"/><rect x="968" y="228" width="1" height="29" fill="#b4b4b4"/><rect x="969" y="228" width="1" height="29" fill="#fafafa"/><path d="M233 279 V291" stroke="#888" stroke-width="1"/><path d="M231 291.2H251" stroke="#666" stroke-width="1"/><rect x="234.5" y="272.5" width="14.5" height="11" rx="1.5" fill="#0a0a0a"/><rect x="237" y="275.5" width="9.5" height="5" rx="1.5" fill="#3a3a3a"/><path d="M236.2 272.5V267.5Q236.2 264.2 240 264.2H244.6Q247.6 264.2 247.6 267V268.5" fill="none" stroke="#0a0a0a" stroke-width="1.7"/><path d="M250.5 262V291" stroke="#888" stroke-width="1"/><rect x="255.5" y="265" width="18.5" height="20.5" fill="#fff" stroke="#111" stroke-width="1.4"/><path d="M261.7 265V285.5M267.8 265V285.5M255.5 271.8H274M255.5 278.6H274" stroke="#111" stroke-width="1.3"/><rect x="261.7" y="271.8" width="6.1" height="6.8" fill="#666"/><rect x="263" y="273.4" width="3.6" height="3.8" fill="#000"/><path d="M253.5 291.2H276M275.6 262V291" stroke="#777" stroke-width="1"/><rect x="281" y="259" width="1" height="32" fill="#c8c8c8"/><rect x="282" y="259" width="1" height="32" fill="#fafafa"/><path d="M307.8 277.8 A7.6 7.6 0 1 1 306.8 270.5" fill="none" stroke="#0a0a0a" stroke-width="1.4"/><path d="M303.5 273.2 L310.6 272 L308.4 278.6 Z" fill="#0a0a0a"/><rect x="478" y="259" width="1" height="32" fill="#c8c8c8"/><rect x="479" y="259" width="1" height="32" fill="#fafafa"/><rect x="481" y="264" width="2" height="2" fill="#c2c2c2"/><rect x="481" y="269" width="2" height="2" fill="#c2c2c2"/><rect x="481" y="274" width="2" height="2" fill="#c2c2c2"/><rect x="481" y="279" width="2" height="2" fill="#c2c2c2"/><rect x="481" y="284" width="2" height="2" fill="#c2c2c2"/><path d="M494.7 267.3V282.3M494.7 268.3H504V273.8H494.7M494.7 277.8L501 274.6L507.3 277.8L501 281.1Z" stroke="#1a1a1a" stroke-width="1.15" fill="none"/><path d="M537.3 267.3V282.3M537.3 268.3H528V273.8H537.3M537.3 277.8L531 274.6L524.7 277.8L531 281.1Z" stroke="#1a1a1a" stroke-width="1.15" fill="none"/><path d="M554.1 268.8H569.1M555.6 268.8V277.3H560.1V268.8M564.6 268.8L568.2 274.8L564.6 280.8L561.2 274.8Z" stroke="#1a1a1a" stroke-width="1.15" fill="none"/><path d="M584.5 280.1H599.5M586 280.1V271.3H590.5V280.1M595 280.1L598.6 273.8L595 267.8L591.6 273.8Z" stroke="#1a1a1a" stroke-width="1.15" fill="none"/><path d="M614.5 274.3H629.5M616 270.3H620.5V278.3H616ZM625 268.3L628.6 274.3L625 280.3L621.6 274.3Z" stroke="#1a1a1a" stroke-width="1.15" fill="none"/><path d="M652.3 266.8V282.3M648.5 268.3H656.0999999999999V273.8H648.5ZM645.8 277.8L652.3 274.6L658.8 277.8L652.3 281.1Z" stroke="#1a1a1a" stroke-width="1.15" fill="none"/><rect x="670" y="259" width="1" height="32" fill="#c8c8c8"/><rect x="671" y="259" width="1" height="32" fill="#fafafa"/><path d="M681.6 270.5H685.1V278.5H681.6M695.6 270.5H692.1V278.5H695.6M685.1 274.5H692.1" stroke="#1a1a1a" stroke-width="1.15" fill="none" stroke-width="1.3"/><path d="M715.5 267.0V270.5H723.5V267.0M715.5 282.5V279.0H723.5V282.5M719.5 270.5V279.0M717.5 272.5L719.5 270.5L721.5 272.5M717.5 277.0L719.5 279.0L721.5 277.0" stroke="#1a1a1a" stroke-width="1.15" fill="none" stroke-width="1.3"/><rect x="741.9" y="270.7" width="15" height="8" stroke="#1a1a1a" stroke-width="1.15" fill="none" stroke-width="1.3"/><path d="M743.9 274.7H754.9" stroke="#666" stroke-width="1"/><rect x="775.5" y="267.5" width="7.8" height="14.5" stroke="#1a1a1a" stroke-width="1.15" fill="none" stroke-width="1.3"/><path d="M779.4 269.5V280.0" stroke="#666" stroke-width="1"/><rect x="803.5" y="267.5" width="13.8" height="14" stroke="#1a1a1a" stroke-width="1.15" fill="none" stroke-width="1.4"/><path d="M810.3 267.5V281.5M803.5 274.5H817.3" stroke="#1a1a1a" stroke-width="1.3"/><rect x="828" y="259" width="1" height="32" fill="#c8c8c8"/><rect x="829" y="259" width="1" height="32" fill="#fafafa"/><path d="M839.5 282V267.3H854.5 M851 279L842 270M842 270L846.1 271.1M842 270L843.1 274.1" stroke="#1a1a1a" stroke-width="1.15" fill="none" stroke-width="1.3"/><path d="M869 267.3H884V282 M872 279.5L881.5 270M881.5 270L880.4 274.1M881.5 270L877.4 271.1" stroke="#1a1a1a" stroke-width="1.15" fill="none" stroke-width="1.3"/><path d="M899 281H914.5V266.5 M902 268.5L911.5 278M911.5 278L907.4 276.9M911.5 278L910.4 273.9" stroke="#1a1a1a" stroke-width="1.15" fill="none" stroke-width="1.3"/><path d="M931 266.5V281H946 M943.5 268.5L934 278M934 278L935.1 273.9M934 278L938.1 276.9" stroke="#1a1a1a" stroke-width="1.15" fill="none" stroke-width="1.3"/><rect x="838.2" y="266.0" width="2.6" height="2.6" fill="#111"/><rect x="882.7" y="266.0" width="2.6" height="2.6" fill="#111"/><rect x="913.2" y="279.7" width="2.6" height="2.6" fill="#111"/><rect x="929.7" y="279.7" width="2.6" height="2.6" fill="#111"/><rect x="961.3" y="267.8" width="13.6" height="13.4" stroke="#1a1a1a" stroke-width="1.15" fill="none" stroke-width="1.3"/><path d="M968.1 265.5V283.5M959 274.5H977" stroke="#333" stroke-width="1"/><circle cx="968.1" cy="274.5" r="1.4" fill="#111"/><path d="M969 273.5l3.5 -3.5" stroke="#111" stroke-width=".8"/><rect x="986" y="259" width="1" height="32" fill="#c8c8c8"/><rect x="987" y="259" width="1" height="32" fill="#fafafa"/><path d="M996.5 267V282.5 M996.5 274.7H1013 M996.5 274.7l3.5 -2.6m-3.5 2.6l3.5 2.6" stroke="#1a1a1a" stroke-width="1.15" fill="none" stroke-width="1.4"/><path d="M1043 267V282.5 M1043 274.7H1025.5 M1043 274.7l-3.5 -2.6m3.5 2.6l-3.5 2.6" stroke="#1a1a1a" stroke-width="1.15" fill="none" stroke-width="1.4"/><path d="M1058.5 265.5H1074.5 M1066.5 265.5V283 M1066.5 265.5l-2.6 3.5m2.6 -3.5l2.6 3.5" stroke="#1a1a1a" stroke-width="1.15" fill="none" stroke-width="1.4"/><path d="M1088 282.3H1103 M1095.5 282.3V265.5 M1095.5 282.3l-2.6 -3.5m2.6 3.5l2.6 -3.5" stroke="#1a1a1a" stroke-width="1.15" fill="none" stroke-width="1.4"/><rect x="1111" y="259" width="1" height="32" fill="#c8c8c8"/><rect x="1112" y="259" width="1" height="32" fill="#fafafa"/></svg>
<svg style="left:0;top:0" width="1445" height="1445" viewBox="0 0 1445 1445"><defs><linearGradient id="gnode" x1="0" y1="0" x2="1" y2="1"><stop offset="0" stop-color="#f4f6fc"/><stop offset="1" stop-color="#9aa6cc"/></linearGradient><linearGradient id="gcor" x1="0" y1="0" x2="1" y2="1"><stop offset="0" stop-color="#3a3a3a"/><stop offset="1" stop-color="#9a9a9a"/></linearGradient><radialGradient id="gcam" cx=".5" cy=".35" r=".7"><stop offset="0" stop-color="#ffffff"/><stop offset="1" stop-color="#c8d0d8"/></radialGradient></defs><rect x="4" y="295" width="2" height="2" fill="#c2c2c2"/><rect x="9.3" y="295" width="2" height="2" fill="#c2c2c2"/><rect x="14" y="295" width="2" height="2" fill="#c2c2c2"/><rect x="18.7" y="295" width="2" height="2" fill="#c2c2c2"/><rect x="23.3" y="295" width="2" height="2" fill="#c2c2c2"/><rect x="0.5" y="300.5" width="30.5" height="28" fill="#e6eef8" stroke="#a4ccf0" stroke-width="1.6"/><path d="M10 304.8 L10.3 318.8 L13.8 316 L17.3 323 L21.8 320.7 L18.2 314.2 L22.5 312.6 Z" fill="#e8f8ec" stroke="#2c6e40" stroke-width="1.3" stroke-linejoin="round"/><path d="M4.5 340.5 Q14 334.5 24 334.8" fill="none" stroke="#5a6480" stroke-width="1.2"/><path d="M11.5 337 L11.8 352 Q12.2 353.6 14 352.8 L23 348.5 Q24 347.6 23 346.4 Z" fill="url(#gnode)" stroke="#2a2e48" stroke-width="1.4" stroke-linejoin="round"/><circle cx="11.3" cy="336.6" r="1.5" fill="#fff" stroke="#2a3a6a" stroke-width=".9"/><rect x="2" y="362" width="26" height="1" fill="#bcbcbc"/><path d="M7 387.4 L21.8 372.7" stroke="#5a6a88" stroke-width="1.3"/><rect x="5.6" y="386" width="2.8" height="2.8" fill="#bfe4f4" stroke="#1a7a90" stroke-width="1"/><circle cx="21.8" cy="372.7" r="1.6" fill="#bfe4f4" stroke="#1a7a90" stroke-width="1"/><path d="M6.5 419.4 L23 403.2" stroke="#5a6a88" stroke-width="1.3"/><rect x="5.1" y="418" width="2.8" height="2.8" fill="#bfe4f4" stroke="#1a7a90" stroke-width="1"/><circle cx="14.7" cy="410.6" r="1.6" fill="#bfe4f4" stroke="#1a7a90" stroke-width="1"/><circle cx="23" cy="403.2" r="1.6" fill="#bfe4f4" stroke="#1a7a90" stroke-width="1"/><path d="M5.3 446.3 L12 438.5 M7.3 434.2 L16 438.6 L24 443.5" stroke="#b05040" stroke-width="1"/><path d="M12 438.5 Q16.5 437 18.5 441.5 Q20 446.5 23.3 449.3" fill="none" stroke="#5a6a88" stroke-width="1.3"/><rect x="3.9" y="445" width="2.8" height="2.8" fill="#bfe4f4" stroke="#1a7a90" stroke-width="1"/><rect x="5.9" y="432.8" width="2.8" height="2.8" fill="#bfe4f4" stroke="#1a7a90" stroke-width="1"/><rect x="14.7" y="437.2" width="2.8" height="2.8" fill="#bfe4f4" stroke="#1a7a90" stroke-width="1"/><rect x="22.6" y="442.1" width="2.8" height="2.8" fill="#bfe4f4" stroke="#1a7a90" stroke-width="1"/><circle cx="23.3" cy="449.3" r="1.6" fill="#bfe4f4" stroke="#1a7a90" stroke-width="1"/><rect x="5.2" y="462.6" width="19.4" height="18" fill="#ffd800" stroke="#7a6a18" stroke-width="1.3"/><circle cx="5.2" cy="462.6" r="1.5" fill="#d8ecf8" stroke="#4a7ab0" stroke-width=".9"/><circle cx="24.6" cy="462.6" r="1.5" fill="#d8ecf8" stroke="#4a7ab0" stroke-width=".9"/><circle cx="5.2" cy="480.6" r="1.5" fill="#d8ecf8" stroke="#4a7ab0" stroke-width=".9"/><circle cx="24.6" cy="480.6" r="1.5" fill="#d8ecf8" stroke="#4a7ab0" stroke-width=".9"/><path d="M5 502 Q5 497.5 11 497 Q15 496.2 19 497 Q25 497.5 25 502 Q25 506 20.5 507.2 Q15 508.8 9.5 507.2 Q5 506 5 502Z" fill="#ffd800" stroke="#7a6a18" stroke-width="1.2"/><circle cx="15" cy="496.6" r="1.5" fill="#bfe4f4" stroke="#1a6a90" stroke-width=".9"/><path d="M11.5 507.7H18.5" stroke="#5a7a5a" stroke-width="1" stroke-dasharray="1 1"/><path d="M12.5 527.3 Q12.6 525.2 10.6 525.2 Q8.6 525.2 8.6 527.6 V529.6 H6.6 V531.8 H8.6 V540.2 H11 V531.8 H12.8 V529.6 H11 V528 Q11 527.2 12.5 527.3Z" fill="#ffd800" stroke="#5a4a10" stroke-width="1"/><path d="M15 522.8 H23.4 V525 H20.4 V538.5 H23.4 V540.7 H15 V538.5 H18 V525 H15Z" fill="#2a7ab0" stroke="#12304a" stroke-width="1"/><path d="M17.1 563.2L22.9 563.2M16.7 564.0L20.8 568.1M15.9 564.4L15.9 570.2M15.1 564.0L11.0 568.1M14.7 563.2L8.9 563.2M15.1 562.4L11.0 558.3M15.9 562.0L15.9 556.2M16.7 562.4L20.8 558.3" stroke="#2a2a3a" stroke-width="1.1"/><rect x="2" y="581" width="26" height="1" fill="#bcbcbc"/><ellipse cx="15.5" cy="607" rx="8.5" ry="3" fill="#f0a030"/><path d="M8.5 603.5 Q8.5 607 15.5 607 Q22.5 607 22.5 603.5Z" fill="#f8c070"/><ellipse cx="16.5" cy="598.5" rx="8.5" ry="8.2" fill="url(#gcam)" stroke="#c8ccd4" stroke-width=".6"/><circle cx="10.5" cy="597.5" r="4.8" fill="#f0a030"/><circle cx="8.3" cy="596.8" r="3.6" fill="#1a6ab0"/><circle cx="7.3" cy="595.6" r="1.2" fill="#7ac0f0"/><rect x="2" y="617" width="26" height="1" fill="#bcbcbc"/><rect x="4.3" y="625" width="21" height="20.8" fill="#fff" stroke="#143458" stroke-width="1.8"/><rect x="6.6" y="627.3" width="1.5" height="1.5" fill="#1818d8"/><rect x="6.6" y="631.1" width="1.5" height="1.5" fill="#1818d8"/><rect x="6.6" y="634.9" width="1.5" height="1.5" fill="#1818d8"/><rect x="6.6" y="638.7" width="1.5" height="1.5" fill="#1818d8"/><rect x="6.6" y="642.5" width="1.5" height="1.5" fill="#1818d8"/><rect x="10.4" y="627.3" width="1.5" height="1.5" fill="#1818d8"/><rect x="10.4" y="631.1" width="1.5" height="1.5" fill="#1818d8"/><rect x="10.4" y="634.9" width="1.5" height="1.5" fill="#1818d8"/><rect x="10.4" y="638.7" width="1.5" height="1.5" fill="#1818d8"/><rect x="10.4" y="642.5" width="1.5" height="1.5" fill="#1818d8"/><rect x="14.3" y="627.3" width="1.5" height="1.5" fill="#1818d8"/><rect x="14.3" y="631.1" width="1.5" height="1.5" fill="#1818d8"/><rect x="14.3" y="634.9" width="1.5" height="1.5" fill="#1818d8"/><rect x="14.3" y="638.7" width="1.5" height="1.5" fill="#1818d8"/><rect x="14.3" y="642.5" width="1.5" height="1.5" fill="#1818d8"/><rect x="18.1" y="627.3" width="1.5" height="1.5" fill="#1818d8"/><rect x="18.1" y="631.1" width="1.5" height="1.5" fill="#1818d8"/><rect x="18.1" y="634.9" width="1.5" height="1.5" fill="#1818d8"/><rect x="18.1" y="638.7" width="1.5" height="1.5" fill="#1818d8"/><rect x="18.1" y="642.5" width="1.5" height="1.5" fill="#1818d8"/><rect x="22.0" y="627.3" width="1.5" height="1.5" fill="#1818d8"/><rect x="22.0" y="631.1" width="1.5" height="1.5" fill="#1818d8"/><rect x="22.0" y="634.9" width="1.5" height="1.5" fill="#1818d8"/><rect x="22.0" y="638.7" width="1.5" height="1.5" fill="#1818d8"/><rect x="22.0" y="642.5" width="1.5" height="1.5" fill="#1818d8"/><rect x="2" y="654" width="26" height="1" fill="#bcbcbc"/><path d="M6 664 L23 680.5 M23 664 L6 680.5" stroke="#9a9a9a" stroke-width="6.5" stroke-linecap="round"/><path d="M6.5 664.5 L22.5 680 M22.5 664.5 L6.5 680" stroke="#3a3a3a" stroke-width="4.6" stroke-linecap="round"/><rect x="2" y="686" width="26" height="1" fill="#bcbcbc"/><path d="M15.7 697.5 V719.5" stroke="#1a1a1a" stroke-width="1.4"/><path d="M13 701 V716.5 H5.8Z" fill="#8a8a8a" stroke="#1a1a1a" stroke-width="1.1"/><path d="M18.5 701 V716.5 H25.7Z" fill="#8a8a8a" stroke="#1a1a1a" stroke-width="1.1"/><path d="M5 738.8 H26.5" stroke="#1a1a1a" stroke-width="1.4"/><path d="M24 736 H9 L24 729Z" fill="#8a8a8a" stroke="#1a1a1a" stroke-width="1.1"/><path d="M24 741.6 H9 L24 748.6Z" fill="#8a8a8a" stroke="#1a1a1a" stroke-width="1.1"/><rect x="9" y="757.5" width="13.5" height="14.5" fill="url(#gcor)"/><path d="M5 757.5 V778 H25" fill="none" stroke="#1a1a1a" stroke-width="2.2"/><path d="M7.5 773.5 H22" stroke="#555" stroke-width="1"/><path d="M22.5 775.5 L26 778 L22.5 780.5Z" fill="#1a1a1a"/><path d="M5 773 l3 3" stroke="#1a1a1a" stroke-width="1"/><rect x="6.8" y="790.8" width="4.6" height="4.4" fill="#d8d8d8" stroke="#1a1a1a" stroke-width="1.3"/><rect x="6.8" y="797.6" width="4.6" height="4.4" fill="#d8d8d8" stroke="#1a1a1a" stroke-width="1.3"/><rect x="6.8" y="804.4" width="4.6" height="4.4" fill="#d8d8d8" stroke="#1a1a1a" stroke-width="1.3"/><rect x="13.7" y="790.8" width="4.6" height="4.4" fill="#d8d8d8" stroke="#1a1a1a" stroke-width="1.3"/><rect x="13.7" y="797.6" width="4.6" height="4.4" fill="#d8d8d8" stroke="#1a1a1a" stroke-width="1.3"/><rect x="13.7" y="804.4" width="4.6" height="4.4" fill="#d8d8d8" stroke="#1a1a1a" stroke-width="1.3"/><rect x="20.6" y="790.8" width="4.6" height="4.4" fill="#d8d8d8" stroke="#1a1a1a" stroke-width="1.3"/><rect x="20.6" y="797.6" width="4.6" height="4.4" fill="#d8d8d8" stroke="#1a1a1a" stroke-width="1.3"/><rect x="20.6" y="804.4" width="4.6" height="4.4" fill="#d8d8d8" stroke="#1a1a1a" stroke-width="1.3"/><rect x="0" y="816" width="31" height="1" fill="#c8c8c8"/></svg>
<svg style="left:0;top:0" width="1445" height="1445" viewBox="0 0 1445 1445"><rect x="508" y="479.5" width="14.6" height="14.8" fill="#00ff00" stroke="#1a5a1a" stroke-width="1"/><circle cx="680.7" cy="652.3" r="165.2" fill="none" stroke="#383838" stroke-width="1.2"/><path d="M671.2 648.9L671.2 645.4L671.2 641.9L671.2 638.4L671.3 634.9L671.3 631.4L671.4 627.9L671.4 624.3L671.5 620.8L671.5 617.3L671.6 613.8L671.7 610.3L671.7 606.8L671.8 603.3L671.9 599.8L689.5 599.8L689.6 603.3L689.7 606.8L689.7 610.3L689.8 613.8L689.9 617.3L689.9 620.8L690.0 624.3L690.0 627.9L690.1 631.4L690.1 634.9L690.2 638.4L690.2 641.9L690.2 645.4L690.2 648.9ZM697.5 648.9L697.5 645.4L697.5 641.9L697.5 638.4L697.4 634.9L697.4 631.4L697.3 627.9L697.3 624.3L697.2 620.8L697.2 617.3L697.1 613.8L697.0 610.3L697.0 606.8L696.9 603.3L696.8 599.8L717.6 599.8L717.9 603.3L718.2 606.8L718.4 610.3L718.7 613.8L718.9 617.3L719.1 620.8L719.3 624.3L719.4 627.9L719.5 631.4L719.6 634.9L719.7 638.4L719.8 641.9L719.9 645.4L719.9 648.9ZM663.9 648.9L663.9 645.4L663.9 641.9L663.9 638.4L664.0 634.9L664.0 631.4L664.1 627.9L664.1 624.3L664.2 620.8L664.2 617.3L664.3 613.8L664.4 610.3L664.4 606.8L664.5 603.3L664.6 599.8L643.8 599.8L643.5 603.3L643.2 606.8L643.0 610.3L642.7 613.8L642.5 617.3L642.3 620.8L642.1 624.3L642.0 627.9L641.9 631.4L641.8 634.9L641.7 638.4L641.6 641.9L641.5 645.4L641.5 648.9ZM727.2 648.9L727.2 645.4L727.1 641.9L727.0 638.4L727.0 634.9L726.8 631.4L726.7 627.9L726.6 624.3L726.4 620.8L726.2 617.3L726.0 613.8L725.7 610.3L725.5 606.8L725.2 603.3L724.9 599.8L745.6 599.8L746.1 603.3L746.6 606.8L747.1 610.3L747.5 613.8L747.9 617.3L748.2 620.8L748.5 624.3L748.8 627.9L749.0 631.4L749.2 634.9L749.3 638.4L749.4 641.9L749.5 645.4L749.6 648.9ZM634.2 648.9L634.2 645.4L634.3 641.9L634.4 638.4L634.4 634.9L634.6 631.4L634.7 627.9L634.8 624.3L635.0 620.8L635.2 617.3L635.4 613.8L635.7 610.3L635.9 606.8L636.2 603.3L636.5 599.8L615.8 599.8L615.3 603.3L614.8 606.8L614.3 610.3L613.9 613.8L613.5 617.3L613.2 620.8L612.9 624.3L612.6 627.9L612.4 631.4L612.2 634.9L612.1 638.4L612.0 641.9L611.9 645.4L611.8 648.9ZM756.9 648.9L756.8 645.4L756.8 641.9L756.6 638.4L756.5 634.9L756.3 631.4L756.1 627.9L755.8 624.3L755.5 620.8L755.2 617.3L754.8 613.8L754.4 610.3L754.0 606.8L753.5 603.3L753.0 599.8L773.7 599.8L774.4 603.3L775.1 606.8L775.7 610.3L776.3 613.8L776.8 617.3L777.3 620.8L777.7 624.3L778.1 627.9L778.4 631.4L778.7 634.9L778.9 638.4L779.1 641.9L779.2 645.4L779.3 648.9ZM604.5 648.9L604.6 645.4L604.6 641.9L604.8 638.4L604.9 634.9L605.1 631.4L605.3 627.9L605.6 624.3L605.9 620.8L606.2 617.3L606.6 613.8L607.0 610.3L607.4 606.8L607.9 603.3L608.4 599.8L587.7 599.8L587.0 603.3L586.3 606.8L585.7 610.3L585.1 613.8L584.6 617.3L584.1 620.8L583.7 624.3L583.3 627.9L583.0 631.4L582.7 634.9L582.5 638.4L582.3 641.9L582.2 645.4L582.1 648.9ZM786.6 648.9L786.5 645.4L786.4 641.9L786.2 638.4L786.0 634.9L785.8 631.4L785.4 627.9L785.1 624.3L784.7 620.8L784.2 617.3L783.7 613.8L783.1 610.3L782.5 606.8L781.9 603.3L781.1 599.8L801.7 599.8L802.7 603.3L803.6 606.8L804.4 610.3L805.1 613.8L805.8 617.3L806.4 620.8L807.0 624.3L807.5 627.9L807.9 631.4L808.2 634.9L808.5 638.4L808.7 641.9L808.9 645.4L809.0 648.9ZM574.8 648.9L574.9 645.4L575.0 641.9L575.2 638.4L575.4 634.9L575.6 631.4L576.0 627.9L576.3 624.3L576.7 620.8L577.2 617.3L577.7 613.8L578.3 610.3L578.9 606.8L579.5 603.3L580.3 599.8L559.7 599.8L558.7 603.3L557.8 606.8L557.0 610.3L556.3 613.8L555.6 617.3L555.0 620.8L554.4 624.3L553.9 627.9L553.5 631.4L553.2 634.9L552.9 638.4L552.7 641.9L552.5 645.4L552.4 648.9ZM816.3 648.9L816.2 645.4L816.0 641.9L815.8 638.4L815.5 634.9L815.2 631.4L814.8 627.9L814.3 624.3L813.8 620.8L813.2 617.3L812.6 613.8L811.9 610.3L811.1 606.8L810.2 603.3L809.3 599.8L829.9 599.8L831.1 603.3L832.2 606.8L833.2 610.3L834.1 613.8L834.9 617.3L835.7 620.8L836.4 624.3L836.9 627.9L837.5 631.4L837.9 634.9L838.2 638.4L838.5 641.9L838.7 645.4L838.8 648.9ZM545.1 648.9L545.2 645.4L545.4 641.9L545.6 638.4L545.9 634.9L546.2 631.4L546.6 627.9L547.1 624.3L547.6 620.8L548.2 617.3L548.8 613.8L549.5 610.3L550.3 606.8L551.2 603.3L552.1 599.8L531.5 599.8L530.3 603.3L529.2 606.8L528.2 610.3L527.3 613.8L526.5 617.3L525.7 620.8L525.0 624.3L524.5 627.9L523.9 631.4L523.5 634.9L523.2 638.4L522.9 641.9L522.7 645.4L522.6 648.9ZM672.1 592.4L672.3 588.9L672.4 585.4L672.5 581.9L672.7 578.4L672.8 574.9L673.0 571.4L673.1 567.9L673.3 564.5L673.5 561.0L673.7 557.5L673.9 554.0L674.1 550.5L674.4 547.0L674.6 543.5L686.8 543.5L687.0 547.0L687.3 550.5L687.5 554.0L687.7 557.5L687.9 561.0L688.1 564.5L688.3 567.9L688.4 571.4L688.6 574.9L688.7 578.4L688.9 581.9L689.0 585.4L689.1 588.9L689.3 592.4ZM696.6 592.4L696.4 588.9L696.3 585.4L696.2 581.9L696.0 578.4L695.9 574.9L695.7 571.4L695.6 567.9L695.4 564.5L695.2 561.0L695.0 557.5L694.8 554.0L694.6 550.5L694.3 547.0L694.1 543.5L708.6 543.5L709.5 547.0L710.2 550.5L711.0 554.0L711.7 557.5L712.3 561.0L713.0 564.5L713.6 567.9L714.1 571.4L714.6 574.9L715.1 578.4L715.6 581.9L716.0 585.4L716.4 588.9L716.8 592.4ZM664.8 592.4L665.0 588.9L665.1 585.4L665.2 581.9L665.4 578.4L665.5 574.9L665.7 571.4L665.8 567.9L666.0 564.5L666.2 561.0L666.4 557.5L666.6 554.0L666.8 550.5L667.1 547.0L667.3 543.5L652.8 543.5L651.9 547.0L651.2 550.5L650.4 554.0L649.7 557.5L649.1 561.0L648.4 564.5L647.8 567.9L647.3 571.4L646.8 574.9L646.3 578.4L645.8 581.9L645.4 585.4L645.0 588.9L644.6 592.4ZM724.2 592.4L723.8 588.9L723.4 585.4L723.0 581.9L722.5 578.4L722.0 574.9L721.5 571.4L720.9 567.9L720.4 564.5L719.8 561.0L719.1 557.5L718.4 554.0L717.7 550.5L716.9 547.0L716.1 543.5L730.4 543.5L731.8 547.0L733.2 550.5L734.4 554.0L735.6 557.5L736.7 561.0L737.8 564.5L738.8 567.9L739.7 571.4L740.6 574.9L741.5 578.4L742.3 581.9L743.0 585.4L743.7 588.9L744.4 592.4ZM637.2 592.4L637.6 588.9L638.0 585.4L638.4 581.9L638.9 578.4L639.4 574.9L639.9 571.4L640.5 567.9L641.0 564.5L641.6 561.0L642.3 557.5L643.0 554.0L643.7 550.5L644.5 547.0L645.3 543.5L631.0 543.5L629.6 547.0L628.2 550.5L627.0 554.0L625.8 557.5L624.7 561.0L623.6 564.5L622.6 567.9L621.7 571.4L620.8 574.9L619.9 578.4L619.1 581.9L618.4 585.4L617.7 588.9L617.0 592.4ZM751.8 592.4L751.2 588.9L750.5 585.4L749.7 581.9L749.0 578.4L748.2 574.9L747.3 571.4L746.4 567.9L745.4 564.5L744.4 561.0L743.3 557.5L742.1 554.0L740.9 550.5L739.6 547.0L738.3 543.5L752.1 543.5L754.1 547.0L756.0 550.5L757.8 554.0L759.5 557.5L761.1 561.0L762.6 564.5L764.0 567.9L765.3 571.4L766.6 574.9L767.8 578.4L768.9 581.9L770.0 585.4L771.0 588.9L771.9 592.4ZM609.6 592.4L610.2 588.9L610.9 585.4L611.7 581.9L612.4 578.4L613.2 574.9L614.1 571.4L615.0 567.9L616.0 564.5L617.0 561.0L618.1 557.5L619.3 554.0L620.5 550.5L621.8 547.0L623.1 543.5L609.3 543.5L607.3 547.0L605.4 550.5L603.6 554.0L601.9 557.5L600.3 561.0L598.8 564.5L597.4 567.9L596.1 571.4L594.8 574.9L593.6 578.4L592.5 581.9L591.4 585.4L590.4 588.9L589.5 592.4ZM779.4 592.4L778.5 588.9L777.6 585.4L776.6 581.9L775.5 578.4L774.3 574.9L773.1 571.4L771.8 567.9L770.5 564.5L769.0 561.0L767.5 557.5L765.9 554.0L764.2 550.5L762.4 547.0L760.5 543.5L773.7 543.5L776.3 547.0L778.8 550.5L781.1 554.0L783.3 557.5L785.4 561.0L787.3 564.5L789.2 567.9L790.9 571.4L792.6 574.9L794.1 578.4L795.6 581.9L796.9 585.4L798.2 588.9L799.4 592.4ZM582.0 592.4L582.9 588.9L583.8 585.4L584.8 581.9L585.9 578.4L587.1 574.9L588.3 571.4L589.6 567.9L590.9 564.5L592.4 561.0L593.9 557.5L595.5 554.0L597.2 550.5L599.0 547.0L600.9 543.5L587.7 543.5L585.1 547.0L582.6 550.5L580.3 554.0L578.1 557.5L576.0 561.0L574.1 564.5L572.2 567.9L570.5 571.4L568.8 574.9L567.3 578.4L565.8 581.9L564.5 585.4L563.2 588.9L562.0 592.4ZM807.1 592.4L805.9 588.9L804.7 585.4L803.4 581.9L802.0 578.4L800.5 574.9L799.0 571.4L797.3 567.9L795.6 564.5L793.7 561.0L791.8 557.5L789.7 554.0L787.5 550.5L785.2 547.0L782.8 543.5L795.5 543.5L798.7 547.0L801.7 550.5L804.6 554.0L807.3 557.5L809.8 561.0L812.2 564.5L814.5 567.9L816.6 571.4L818.6 574.9L820.5 578.4L822.3 581.9L824.0 585.4L825.6 588.9L827.1 592.4ZM554.3 592.4L555.5 588.9L556.7 585.4L558.0 581.9L559.4 578.4L560.9 574.9L562.4 571.4L564.1 567.9L565.8 564.5L567.7 561.0L569.6 557.5L571.7 554.0L573.9 550.5L576.2 547.0L578.6 543.5L565.9 543.5L562.7 547.0L559.7 550.5L556.8 554.0L554.1 557.5L551.6 561.0L549.2 564.5L546.9 567.9L544.8 571.4L542.8 574.9L540.9 578.4L539.1 581.9L537.4 585.4L535.8 588.9L534.3 592.4ZM675.3 535.2L675.5 533.3L675.6 531.4L675.8 529.5L676.0 527.7L676.2 525.8L676.4 523.9L676.6 522.0L676.8 520.1L677.0 518.2L677.3 516.3L677.5 514.5L677.5 514.3L677.6 514.2L677.6 514.0L677.6 513.9L677.6 513.7L677.6 513.6L677.7 513.4L683.7 513.4L683.8 513.6L683.8 513.7L683.8 513.9L683.8 514.0L683.8 514.2L683.9 514.3L683.9 514.5L684.1 516.3L684.4 518.2L684.6 520.1L684.8 522.0L685.0 523.9L685.2 525.8L685.4 527.7L685.6 529.5L685.8 531.4L685.9 533.3L686.1 535.2ZM693.4 535.2L693.3 533.3L693.1 531.4L692.9 529.5L692.7 527.7L692.5 525.8L692.4 523.9L692.2 522.0L691.9 520.1L691.7 518.2L691.5 516.3L691.2 514.5L691.2 514.3L691.2 514.2L691.2 514.0L691.2 513.9L691.1 513.7L691.1 513.6L691.1 513.4L691.1 513.3L698.5 513.3L698.6 513.4L698.7 513.6L698.7 513.7L698.8 513.9L698.9 514.0L699.0 514.2L699.0 514.3L699.1 514.5L699.9 516.3L700.7 518.2L701.4 520.1L702.2 522.0L702.8 523.9L703.5 525.8L704.1 527.7L704.7 529.5L705.3 531.4L705.9 533.3L706.4 535.2ZM668.0 535.2L668.1 533.3L668.3 531.4L668.5 529.5L668.7 527.7L668.9 525.8L669.0 523.9L669.2 522.0L669.5 520.1L669.7 518.2L669.9 516.3L670.2 514.5L670.2 514.3L670.2 514.2L670.2 514.0L670.2 513.9L670.3 513.7L670.3 513.6L670.3 513.4L670.3 513.3L662.9 513.3L662.8 513.4L662.7 513.6L662.7 513.7L662.6 513.9L662.5 514.0L662.4 514.2L662.4 514.3L662.3 514.5L661.5 516.3L660.7 518.2L660.0 520.1L659.2 522.0L658.6 523.9L657.9 525.8L657.3 527.7L656.7 529.5L656.1 531.4L655.5 533.3L655.0 535.2ZM714.0 535.2L713.5 533.3L713.0 531.4L712.4 529.5L711.8 527.7L711.2 525.8L710.6 523.9L709.9 522.0L709.3 520.1L708.5 518.2L707.8 516.3L707.0 514.5L707.0 514.3L706.9 514.2L706.9 514.0L706.8 513.9L706.7 513.7L706.7 513.6L706.6 513.4L706.5 513.3L706.5 513.1L706.4 513.0L706.3 512.8L706.3 512.7L712.6 512.7L712.7 512.8L712.8 513.0L713.0 513.1L713.1 513.3L713.2 513.4L713.3 513.6L713.5 513.7L713.6 513.9L713.7 514.0L713.8 514.2L713.9 514.3L714.0 514.5L715.5 516.3L716.8 518.2L718.1 520.1L719.3 522.0L720.5 523.9L721.6 525.8L722.7 527.7L723.8 529.5L724.8 531.4L725.7 533.3L726.7 535.2ZM647.4 535.2L647.9 533.3L648.4 531.4L649.0 529.5L649.6 527.7L650.2 525.8L650.8 523.9L651.5 522.0L652.1 520.1L652.9 518.2L653.6 516.3L654.4 514.5L654.4 514.3L654.5 514.2L654.5 514.0L654.6 513.9L654.7 513.7L654.7 513.6L654.8 513.4L654.9 513.3L654.9 513.1L655.0 513.0L655.1 512.8L655.1 512.7L648.8 512.7L648.7 512.8L648.6 513.0L648.4 513.1L648.3 513.3L648.2 513.4L648.1 513.6L647.9 513.7L647.8 513.9L647.7 514.0L647.6 514.2L647.5 514.3L647.4 514.5L645.9 516.3L644.6 518.2L643.3 520.1L642.1 522.0L640.9 523.9L639.8 525.8L638.7 527.7L637.6 529.5L636.6 531.4L635.7 533.3L634.7 535.2ZM734.7 535.2L733.9 533.3L732.9 531.4L732.0 529.5L731.0 527.7L730.0 525.8L729.0 523.9L727.9 522.0L726.8 520.1L725.6 518.2L724.4 516.3L723.1 514.5L721.8 512.6L721.7 512.4L721.5 512.3L721.4 512.1L721.3 512.0L721.2 511.8L721.1 511.7L725.6 511.7L725.8 511.8L726.0 512.0L726.1 512.1L726.3 512.3L726.5 512.4L726.7 512.6L728.8 514.5L730.8 516.3L732.8 518.2L734.6 520.1L736.4 522.0L738.0 523.9L739.6 525.8L741.2 527.7L742.7 529.5L744.1 531.4L745.5 533.3L746.8 535.2ZM626.7 535.2L627.5 533.3L628.5 531.4L629.4 529.5L630.4 527.7L631.4 525.8L632.4 523.9L633.5 522.0L634.6 520.1L635.8 518.2L637.0 516.3L638.3 514.5L639.6 512.6L639.7 512.4L639.9 512.3L640.0 512.1L640.1 512.0L640.2 511.8L640.3 511.7L635.8 511.7L635.6 511.8L635.4 512.0L635.3 512.1L635.1 512.3L634.9 512.4L634.7 512.6L632.6 514.5L630.6 516.3L628.6 518.2L626.8 520.1L625.0 522.0L623.4 523.9L621.8 525.8L620.2 527.7L618.7 529.5L617.3 531.4L615.9 533.3L614.6 535.2ZM755.5 535.2L754.3 533.3L753.0 531.4L751.7 529.5L750.4 527.7L749.0 525.8L747.5 523.9L746.0 522.0L744.4 520.1L742.8 518.2L741.1 516.3L739.3 514.5L737.5 512.6L735.5 510.7L735.4 510.5L735.2 510.4L737.2 510.4L737.5 510.5L737.7 510.7L740.7 512.6L743.5 514.5L746.1 516.3L748.6 518.2L751.0 520.1L753.3 522.0L755.5 523.9L757.5 525.8L759.5 527.7L761.5 529.5L763.3 531.4L765.1 533.3L766.8 535.2ZM605.9 535.2L607.1 533.3L608.4 531.4L609.7 529.5L611.0 527.7L612.4 525.8L613.9 523.9L615.4 522.0L617.0 520.1L618.6 518.2L620.3 516.3L622.1 514.5L623.9 512.6L625.9 510.7L626.0 510.5L626.2 510.4L624.2 510.4L623.9 510.5L623.7 510.7L620.7 512.6L617.9 514.5L615.3 516.3L612.8 518.2L610.4 520.1L608.1 522.0L605.9 523.9L603.9 525.8L601.9 527.7L599.9 529.5L598.1 531.4L596.3 533.3L594.6 535.2ZM776.4 535.2L774.9 533.3L773.2 531.4L771.6 529.5L769.8 527.7L768.0 525.8L766.1 523.9L764.2 522.0L762.2 520.1L760.1 518.2L757.9 516.3L755.7 514.5L753.3 512.6L750.8 510.7L750.6 510.5L750.8 510.5L751.1 510.7L754.8 512.6L758.2 514.5L761.5 516.3L764.6 518.2L767.5 520.1L770.3 522.0L773.0 523.9L775.6 525.8L778.0 527.7L780.4 529.5L782.7 531.4L784.9 533.3L787.0 535.2ZM585.0 535.2L586.5 533.3L588.2 531.4L589.8 529.5L591.6 527.7L593.4 525.8L595.3 523.9L597.2 522.0L599.2 520.1L601.3 518.2L603.5 516.3L605.7 514.5L608.1 512.6L610.6 510.7L610.8 510.5L610.6 510.5L610.3 510.7L606.6 512.6L603.2 514.5L599.9 516.3L596.8 518.2L593.9 520.1L591.1 522.0L588.4 523.9L585.8 525.8L583.4 527.7L581.0 529.5L578.7 531.4L576.5 533.3L574.4 535.2ZM671.2 655.7L671.2 659.2L671.2 662.7L671.2 666.2L671.3 669.7L671.3 673.2L671.4 676.7L671.4 680.2L671.5 683.8L671.5 687.3L671.6 690.8L671.7 694.3L671.7 697.8L671.8 701.3L671.9 704.8L689.5 704.8L689.6 701.3L689.7 697.8L689.7 694.3L689.8 690.8L689.9 687.3L689.9 683.8L690.0 680.2L690.0 676.7L690.1 673.2L690.1 669.7L690.2 666.2L690.2 662.7L690.2 659.2L690.2 655.7ZM697.5 655.7L697.5 659.2L697.5 662.7L697.5 666.2L697.4 669.7L697.4 673.2L697.3 676.7L697.3 680.2L697.2 683.8L697.2 687.3L697.1 690.8L697.0 694.3L697.0 697.8L696.9 701.3L696.8 704.8L717.6 704.8L717.9 701.3L718.2 697.8L718.4 694.3L718.7 690.8L718.9 687.3L719.1 683.8L719.3 680.2L719.4 676.7L719.5 673.2L719.6 669.7L719.7 666.2L719.8 662.7L719.9 659.2L719.9 655.7ZM663.9 655.7L663.9 659.2L663.9 662.7L663.9 666.2L664.0 669.7L664.0 673.2L664.1 676.7L664.1 680.2L664.2 683.8L664.2 687.3L664.3 690.8L664.4 694.3L664.4 697.8L664.5 701.3L664.6 704.8L643.8 704.8L643.5 701.3L643.2 697.8L643.0 694.3L642.7 690.8L642.5 687.3L642.3 683.8L642.1 680.2L642.0 676.7L641.9 673.2L641.8 669.7L641.7 666.2L641.6 662.7L641.5 659.2L641.5 655.7ZM727.2 655.7L727.2 659.2L727.1 662.7L727.0 666.2L727.0 669.7L726.8 673.2L726.7 676.7L726.6 680.2L726.4 683.8L726.2 687.3L726.0 690.8L725.7 694.3L725.5 697.8L725.2 701.3L724.9 704.8L745.6 704.8L746.1 701.3L746.6 697.8L747.1 694.3L747.5 690.8L747.9 687.3L748.2 683.8L748.5 680.2L748.8 676.7L749.0 673.2L749.2 669.7L749.3 666.2L749.4 662.7L749.5 659.2L749.6 655.7ZM634.2 655.7L634.2 659.2L634.3 662.7L634.4 666.2L634.4 669.7L634.6 673.2L634.7 676.7L634.8 680.2L635.0 683.8L635.2 687.3L635.4 690.8L635.7 694.3L635.9 697.8L636.2 701.3L636.5 704.8L615.8 704.8L615.3 701.3L614.8 697.8L614.3 694.3L613.9 690.8L613.5 687.3L613.2 683.8L612.9 680.2L612.6 676.7L612.4 673.2L612.2 669.7L612.1 666.2L612.0 662.7L611.9 659.2L611.8 655.7ZM756.9 655.7L756.8 659.2L756.8 662.7L756.6 666.2L756.5 669.7L756.3 673.2L756.1 676.7L755.8 680.2L755.5 683.8L755.2 687.3L754.8 690.8L754.4 694.3L754.0 697.8L753.5 701.3L753.0 704.8L773.7 704.8L774.4 701.3L775.1 697.8L775.7 694.3L776.3 690.8L776.8 687.3L777.3 683.8L777.7 680.2L778.1 676.7L778.4 673.2L778.7 669.7L778.9 666.2L779.1 662.7L779.2 659.2L779.3 655.7ZM604.5 655.7L604.6 659.2L604.6 662.7L604.8 666.2L604.9 669.7L605.1 673.2L605.3 676.7L605.6 680.2L605.9 683.8L606.2 687.3L606.6 690.8L607.0 694.3L607.4 697.8L607.9 701.3L608.4 704.8L587.7 704.8L587.0 701.3L586.3 697.8L585.7 694.3L585.1 690.8L584.6 687.3L584.1 683.8L583.7 680.2L583.3 676.7L583.0 673.2L582.7 669.7L582.5 666.2L582.3 662.7L582.2 659.2L582.1 655.7ZM786.6 655.7L786.5 659.2L786.4 662.7L786.2 666.2L786.0 669.7L785.8 673.2L785.4 676.7L785.1 680.2L784.7 683.8L784.2 687.3L783.7 690.8L783.1 694.3L782.5 697.8L781.9 701.3L781.1 704.8L801.7 704.8L802.7 701.3L803.6 697.8L804.4 694.3L805.1 690.8L805.8 687.3L806.4 683.8L807.0 680.2L807.5 676.7L807.9 673.2L808.2 669.7L808.5 666.2L808.7 662.7L808.9 659.2L809.0 655.7ZM574.8 655.7L574.9 659.2L575.0 662.7L575.2 666.2L575.4 669.7L575.6 673.2L576.0 676.7L576.3 680.2L576.7 683.8L577.2 687.3L577.7 690.8L578.3 694.3L578.9 697.8L579.5 701.3L580.3 704.8L559.7 704.8L558.7 701.3L557.8 697.8L557.0 694.3L556.3 690.8L555.6 687.3L555.0 683.8L554.4 680.2L553.9 676.7L553.5 673.2L553.2 669.7L552.9 666.2L552.7 662.7L552.5 659.2L552.4 655.7ZM816.3 655.7L816.2 659.2L816.0 662.7L815.8 666.2L815.5 669.7L815.2 673.2L814.8 676.7L814.3 680.2L813.8 683.8L813.2 687.3L812.6 690.8L811.9 694.3L811.1 697.8L810.2 701.3L809.3 704.8L829.9 704.8L831.1 701.3L832.2 697.8L833.2 694.3L834.1 690.8L834.9 687.3L835.7 683.8L836.4 680.2L836.9 676.7L837.5 673.2L837.9 669.7L838.2 666.2L838.5 662.7L838.7 659.2L838.8 655.7ZM545.1 655.7L545.2 659.2L545.4 662.7L545.6 666.2L545.9 669.7L546.2 673.2L546.6 676.7L547.1 680.2L547.6 683.8L548.2 687.3L548.8 690.8L549.5 694.3L550.3 697.8L551.2 701.3L552.1 704.8L531.5 704.8L530.3 701.3L529.2 697.8L528.2 694.3L527.3 690.8L526.5 687.3L525.7 683.8L525.0 680.2L524.5 676.7L523.9 673.2L523.5 669.7L523.2 666.2L522.9 662.7L522.7 659.2L522.6 655.7ZM672.1 712.2L672.3 715.7L672.4 719.2L672.5 722.7L672.7 726.2L672.8 729.7L673.0 733.2L673.1 736.6L673.3 740.1L673.5 743.6L673.7 747.1L673.9 750.6L674.1 754.1L674.4 757.6L674.6 761.1L686.8 761.1L687.0 757.6L687.3 754.1L687.5 750.6L687.7 747.1L687.9 743.6L688.1 740.1L688.3 736.6L688.4 733.2L688.6 729.7L688.7 726.2L688.9 722.7L689.0 719.2L689.1 715.7L689.3 712.2ZM696.6 712.2L696.4 715.7L696.3 719.2L696.2 722.7L696.0 726.2L695.9 729.7L695.7 733.2L695.6 736.6L695.4 740.1L695.2 743.6L695.0 747.1L694.8 750.6L694.6 754.1L694.3 757.6L694.1 761.1L708.6 761.1L709.5 757.6L710.2 754.1L711.0 750.6L711.7 747.1L712.3 743.6L713.0 740.1L713.6 736.6L714.1 733.2L714.6 729.7L715.1 726.2L715.6 722.7L716.0 719.2L716.4 715.7L716.8 712.2ZM664.8 712.2L665.0 715.7L665.1 719.2L665.2 722.7L665.4 726.2L665.5 729.7L665.7 733.2L665.8 736.6L666.0 740.1L666.2 743.6L666.4 747.1L666.6 750.6L666.8 754.1L667.1 757.6L667.3 761.1L652.8 761.1L651.9 757.6L651.2 754.1L650.4 750.6L649.7 747.1L649.1 743.6L648.4 740.1L647.8 736.6L647.3 733.2L646.8 729.7L646.3 726.2L645.8 722.7L645.4 719.2L645.0 715.7L644.6 712.2ZM724.2 712.2L723.8 715.7L723.4 719.2L723.0 722.7L722.5 726.2L722.0 729.7L721.5 733.2L720.9 736.6L720.4 740.1L719.8 743.6L719.1 747.1L718.4 750.6L717.7 754.1L716.9 757.6L716.1 761.1L730.4 761.1L731.8 757.6L733.2 754.1L734.4 750.6L735.6 747.1L736.7 743.6L737.8 740.1L738.8 736.6L739.7 733.2L740.6 729.7L741.5 726.2L742.3 722.7L743.0 719.2L743.7 715.7L744.4 712.2ZM637.2 712.2L637.6 715.7L638.0 719.2L638.4 722.7L638.9 726.2L639.4 729.7L639.9 733.2L640.5 736.6L641.0 740.1L641.6 743.6L642.3 747.1L643.0 750.6L643.7 754.1L644.5 757.6L645.3 761.1L631.0 761.1L629.6 757.6L628.2 754.1L627.0 750.6L625.8 747.1L624.7 743.6L623.6 740.1L622.6 736.6L621.7 733.2L620.8 729.7L619.9 726.2L619.1 722.7L618.4 719.2L617.7 715.7L617.0 712.2ZM751.8 712.2L751.2 715.7L750.5 719.2L749.7 722.7L749.0 726.2L748.2 729.7L747.3 733.2L746.4 736.6L745.4 740.1L744.4 743.6L743.3 747.1L742.1 750.6L740.9 754.1L739.6 757.6L738.3 761.1L752.1 761.1L754.1 757.6L756.0 754.1L757.8 750.6L759.5 747.1L761.1 743.6L762.6 740.1L764.0 736.6L765.3 733.2L766.6 729.7L767.8 726.2L768.9 722.7L770.0 719.2L771.0 715.7L771.9 712.2ZM609.6 712.2L610.2 715.7L610.9 719.2L611.7 722.7L612.4 726.2L613.2 729.7L614.1 733.2L615.0 736.6L616.0 740.1L617.0 743.6L618.1 747.1L619.3 750.6L620.5 754.1L621.8 757.6L623.1 761.1L609.3 761.1L607.3 757.6L605.4 754.1L603.6 750.6L601.9 747.1L600.3 743.6L598.8 740.1L597.4 736.6L596.1 733.2L594.8 729.7L593.6 726.2L592.5 722.7L591.4 719.2L590.4 715.7L589.5 712.2ZM779.4 712.2L778.5 715.7L777.6 719.2L776.6 722.7L775.5 726.2L774.3 729.7L773.1 733.2L771.8 736.6L770.5 740.1L769.0 743.6L767.5 747.1L765.9 750.6L764.2 754.1L762.4 757.6L760.5 761.1L773.7 761.1L776.3 757.6L778.8 754.1L781.1 750.6L783.3 747.1L785.4 743.6L787.3 740.1L789.2 736.6L790.9 733.2L792.6 729.7L794.1 726.2L795.6 722.7L796.9 719.2L798.2 715.7L799.4 712.2ZM582.0 712.2L582.9 715.7L583.8 719.2L584.8 722.7L585.9 726.2L587.1 729.7L588.3 733.2L589.6 736.6L590.9 740.1L592.4 743.6L593.9 747.1L595.5 750.6L597.2 754.1L599.0 757.6L600.9 761.1L587.7 761.1L585.1 757.6L582.6 754.1L580.3 750.6L578.1 747.1L576.0 743.6L574.1 740.1L572.2 736.6L570.5 733.2L568.8 729.7L567.3 726.2L565.8 722.7L564.5 719.2L563.2 715.7L562.0 712.2ZM807.1 712.2L805.9 715.7L804.7 719.2L803.4 722.7L802.0 726.2L800.5 729.7L799.0 733.2L797.3 736.6L795.6 740.1L793.7 743.6L791.8 747.1L789.7 750.6L787.5 754.1L785.2 757.6L782.8 761.1L795.5 761.1L798.7 757.6L801.7 754.1L804.6 750.6L807.3 747.1L809.8 743.6L812.2 740.1L814.5 736.6L816.6 733.2L818.6 729.7L820.5 726.2L822.3 722.7L824.0 719.2L825.6 715.7L827.1 712.2ZM554.3 712.2L555.5 715.7L556.7 719.2L558.0 722.7L559.4 726.2L560.9 729.7L562.4 733.2L564.1 736.6L565.8 740.1L567.7 743.6L569.6 747.1L571.7 750.6L573.9 754.1L576.2 757.6L578.6 761.1L565.9 761.1L562.7 757.6L559.7 754.1L556.8 750.6L554.1 747.1L551.6 743.6L549.2 740.1L546.9 736.6L544.8 733.2L542.8 729.7L540.9 726.2L539.1 722.7L537.4 719.2L535.8 715.7L534.3 712.2ZM675.3 769.4L675.5 771.3L675.6 773.2L675.8 775.1L676.0 776.9L676.2 778.8L676.4 780.7L676.6 782.6L676.8 784.5L677.0 786.4L677.3 788.3L677.5 790.1L677.5 790.3L677.6 790.4L677.6 790.6L677.6 790.7L677.6 790.9L677.6 791.0L677.7 791.2L683.7 791.2L683.8 791.0L683.8 790.9L683.8 790.7L683.8 790.6L683.8 790.4L683.9 790.3L683.9 790.1L684.1 788.3L684.4 786.4L684.6 784.5L684.8 782.6L685.0 780.7L685.2 778.8L685.4 776.9L685.6 775.1L685.8 773.2L685.9 771.3L686.1 769.4ZM693.4 769.4L693.3 771.3L693.1 773.2L692.9 775.1L692.7 776.9L692.5 778.8L692.4 780.7L692.2 782.6L691.9 784.5L691.7 786.4L691.5 788.3L691.2 790.1L691.2 790.3L691.2 790.4L691.2 790.6L691.2 790.7L691.1 790.9L691.1 791.0L691.1 791.2L691.1 791.3L698.5 791.3L698.6 791.2L698.7 791.0L698.7 790.9L698.8 790.7L698.9 790.6L699.0 790.4L699.0 790.3L699.1 790.1L699.9 788.3L700.7 786.4L701.4 784.5L702.2 782.6L702.8 780.7L703.5 778.8L704.1 776.9L704.7 775.1L705.3 773.2L705.9 771.3L706.4 769.4ZM668.0 769.4L668.1 771.3L668.3 773.2L668.5 775.1L668.7 776.9L668.9 778.8L669.0 780.7L669.2 782.6L669.5 784.5L669.7 786.4L669.9 788.3L670.2 790.1L670.2 790.3L670.2 790.4L670.2 790.6L670.2 790.7L670.3 790.9L670.3 791.0L670.3 791.2L670.3 791.3L662.9 791.3L662.8 791.2L662.7 791.0L662.7 790.9L662.6 790.7L662.5 790.6L662.4 790.4L662.4 790.3L662.3 790.1L661.5 788.3L660.7 786.4L660.0 784.5L659.2 782.6L658.6 780.7L657.9 778.8L657.3 776.9L656.7 775.1L656.1 773.2L655.5 771.3L655.0 769.4ZM714.0 769.4L713.5 771.3L713.0 773.2L712.4 775.1L711.8 776.9L711.2 778.8L710.6 780.7L709.9 782.6L709.3 784.5L708.5 786.4L707.8 788.3L707.0 790.1L707.0 790.3L706.9 790.4L706.9 790.6L706.8 790.7L706.7 790.9L706.7 791.0L706.6 791.2L706.5 791.3L706.5 791.5L706.4 791.6L706.3 791.8L706.3 791.9L712.6 791.9L712.7 791.8L712.8 791.6L713.0 791.5L713.1 791.3L713.2 791.2L713.3 791.0L713.5 790.9L713.6 790.7L713.7 790.6L713.8 790.4L713.9 790.3L714.0 790.1L715.5 788.3L716.8 786.4L718.1 784.5L719.3 782.6L720.5 780.7L721.6 778.8L722.7 776.9L723.8 775.1L724.8 773.2L725.7 771.3L726.7 769.4ZM647.4 769.4L647.9 771.3L648.4 773.2L649.0 775.1L649.6 776.9L650.2 778.8L650.8 780.7L651.5 782.6L652.1 784.5L652.9 786.4L653.6 788.3L654.4 790.1L654.4 790.3L654.5 790.4L654.5 790.6L654.6 790.7L654.7 790.9L654.7 791.0L654.8 791.2L654.9 791.3L654.9 791.5L655.0 791.6L655.1 791.8L655.1 791.9L648.8 791.9L648.7 791.8L648.6 791.6L648.4 791.5L648.3 791.3L648.2 791.2L648.1 791.0L647.9 790.9L647.8 790.7L647.7 790.6L647.6 790.4L647.5 790.3L647.4 790.1L645.9 788.3L644.6 786.4L643.3 784.5L642.1 782.6L640.9 780.7L639.8 778.8L638.7 776.9L637.6 775.1L636.6 773.2L635.7 771.3L634.7 769.4ZM734.7 769.4L733.9 771.3L732.9 773.2L732.0 775.1L731.0 776.9L730.0 778.8L729.0 780.7L727.9 782.6L726.8 784.5L725.6 786.4L724.4 788.3L723.1 790.1L721.8 792.0L721.7 792.2L721.5 792.3L721.4 792.5L721.3 792.6L721.2 792.8L721.1 792.9L725.6 792.9L725.8 792.8L726.0 792.6L726.1 792.5L726.3 792.3L726.5 792.2L726.7 792.0L728.8 790.1L730.8 788.3L732.8 786.4L734.6 784.5L736.4 782.6L738.0 780.7L739.6 778.8L741.2 776.9L742.7 775.1L744.1 773.2L745.5 771.3L746.8 769.4ZM626.7 769.4L627.5 771.3L628.5 773.2L629.4 775.1L630.4 776.9L631.4 778.8L632.4 780.7L633.5 782.6L634.6 784.5L635.8 786.4L637.0 788.3L638.3 790.1L639.6 792.0L639.7 792.2L639.9 792.3L640.0 792.5L640.1 792.6L640.2 792.8L640.3 792.9L635.8 792.9L635.6 792.8L635.4 792.6L635.3 792.5L635.1 792.3L634.9 792.2L634.7 792.0L632.6 790.1L630.6 788.3L628.6 786.4L626.8 784.5L625.0 782.6L623.4 780.7L621.8 778.8L620.2 776.9L618.7 775.1L617.3 773.2L615.9 771.3L614.6 769.4ZM755.5 769.4L754.3 771.3L753.0 773.2L751.7 775.1L750.4 776.9L749.0 778.8L747.5 780.7L746.0 782.6L744.4 784.5L742.8 786.4L741.1 788.3L739.3 790.1L737.5 792.0L735.5 793.9L735.4 794.1L735.2 794.2L737.2 794.2L737.5 794.1L737.7 793.9L740.7 792.0L743.5 790.1L746.1 788.3L748.6 786.4L751.0 784.5L753.3 782.6L755.5 780.7L757.5 778.8L759.5 776.9L761.5 775.1L763.3 773.2L765.1 771.3L766.8 769.4ZM605.9 769.4L607.1 771.3L608.4 773.2L609.7 775.1L611.0 776.9L612.4 778.8L613.9 780.7L615.4 782.6L617.0 784.5L618.6 786.4L620.3 788.3L622.1 790.1L623.9 792.0L625.9 793.9L626.0 794.1L626.2 794.2L624.2 794.2L623.9 794.1L623.7 793.9L620.7 792.0L617.9 790.1L615.3 788.3L612.8 786.4L610.4 784.5L608.1 782.6L605.9 780.7L603.9 778.8L601.9 776.9L599.9 775.1L598.1 773.2L596.3 771.3L594.6 769.4ZM776.4 769.4L774.9 771.3L773.2 773.2L771.6 775.1L769.8 776.9L768.0 778.8L766.1 780.7L764.2 782.6L762.2 784.5L760.1 786.4L757.9 788.3L755.7 790.1L753.3 792.0L750.8 793.9L750.6 794.1L750.8 794.1L751.1 793.9L754.8 792.0L758.2 790.1L761.5 788.3L764.6 786.4L767.5 784.5L770.3 782.6L773.0 780.7L775.6 778.8L778.0 776.9L780.4 775.1L782.7 773.2L784.9 771.3L787.0 769.4ZM585.0 769.4L586.5 771.3L588.2 773.2L589.8 775.1L591.6 776.9L593.4 778.8L595.3 780.7L597.2 782.6L599.2 784.5L601.3 786.4L603.5 788.3L605.7 790.1L608.1 792.0L610.6 793.9L610.8 794.1L610.6 794.1L610.3 793.9L606.6 792.0L603.2 790.1L599.9 788.3L596.8 786.4L593.9 784.5L591.1 782.6L588.4 780.7L585.8 778.8L583.4 776.9L581.0 775.1L578.7 773.2L576.5 771.3L574.4 769.4Z" fill="none" stroke="#383838" stroke-width="1.2" stroke-linejoin="miter"/><circle cx="1013.2" cy="652.3" r="165.2" fill="none" stroke="#383838" stroke-width="1.2"/><path d="M1003.7 648.9L1003.7 645.4L1003.7 641.9L1003.7 638.4L1003.8 634.9L1003.8 631.4L1003.9 627.9L1003.9 624.3L1004.0 620.8L1004.0 617.3L1004.1 613.8L1004.2 610.3L1004.2 606.8L1004.3 603.3L1004.4 599.8L1022.0 599.8L1022.1 603.3L1022.2 606.8L1022.2 610.3L1022.3 613.8L1022.4 617.3L1022.4 620.8L1022.5 624.3L1022.5 627.9L1022.6 631.4L1022.6 634.9L1022.7 638.4L1022.7 641.9L1022.7 645.4L1022.7 648.9ZM1030.0 648.9L1030.0 645.4L1030.0 641.9L1030.0 638.4L1029.9 634.9L1029.9 631.4L1029.8 627.9L1029.8 624.3L1029.7 620.8L1029.7 617.3L1029.6 613.8L1029.5 610.3L1029.5 606.8L1029.4 603.3L1029.3 599.8L1050.1 599.8L1050.4 603.3L1050.7 606.8L1050.9 610.3L1051.2 613.8L1051.4 617.3L1051.6 620.8L1051.8 624.3L1051.9 627.9L1052.0 631.4L1052.1 634.9L1052.2 638.4L1052.3 641.9L1052.4 645.4L1052.4 648.9ZM996.4 648.9L996.4 645.4L996.4 641.9L996.4 638.4L996.5 634.9L996.5 631.4L996.6 627.9L996.6 624.3L996.7 620.8L996.7 617.3L996.8 613.8L996.9 610.3L996.9 606.8L997.0 603.3L997.1 599.8L976.3 599.8L976.0 603.3L975.7 606.8L975.5 610.3L975.2 613.8L975.0 617.3L974.8 620.8L974.6 624.3L974.5 627.9L974.4 631.4L974.3 634.9L974.2 638.4L974.1 641.9L974.0 645.4L974.0 648.9ZM1059.7 648.9L1059.7 645.4L1059.6 641.9L1059.5 638.4L1059.5 634.9L1059.3 631.4L1059.2 627.9L1059.1 624.3L1058.9 620.8L1058.7 617.3L1058.5 613.8L1058.2 610.3L1058.0 606.8L1057.7 603.3L1057.4 599.8L1078.1 599.8L1078.6 603.3L1079.1 606.8L1079.6 610.3L1080.0 613.8L1080.4 617.3L1080.7 620.8L1081.0 624.3L1081.3 627.9L1081.5 631.4L1081.7 634.9L1081.8 638.4L1081.9 641.9L1082.0 645.4L1082.1 648.9ZM966.7 648.9L966.7 645.4L966.8 641.9L966.9 638.4L966.9 634.9L967.1 631.4L967.2 627.9L967.3 624.3L967.5 620.8L967.7 617.3L967.9 613.8L968.2 610.3L968.4 606.8L968.7 603.3L969.0 599.8L948.3 599.8L947.8 603.3L947.3 606.8L946.8 610.3L946.4 613.8L946.0 617.3L945.7 620.8L945.4 624.3L945.1 627.9L944.9 631.4L944.7 634.9L944.6 638.4L944.5 641.9L944.4 645.4L944.3 648.9ZM1089.4 648.9L1089.3 645.4L1089.3 641.9L1089.1 638.4L1089.0 634.9L1088.8 631.4L1088.6 627.9L1088.3 624.3L1088.0 620.8L1087.7 617.3L1087.3 613.8L1086.9 610.3L1086.5 606.8L1086.0 603.3L1085.5 599.8L1106.2 599.8L1106.9 603.3L1107.6 606.8L1108.2 610.3L1108.8 613.8L1109.3 617.3L1109.8 620.8L1110.2 624.3L1110.6 627.9L1110.9 631.4L1111.2 634.9L1111.4 638.4L1111.6 641.9L1111.7 645.4L1111.8 648.9ZM937.0 648.9L937.1 645.4L937.1 641.9L937.3 638.4L937.4 634.9L937.6 631.4L937.8 627.9L938.1 624.3L938.4 620.8L938.7 617.3L939.1 613.8L939.5 610.3L939.9 606.8L940.4 603.3L940.9 599.8L920.2 599.8L919.5 603.3L918.8 606.8L918.2 610.3L917.6 613.8L917.1 617.3L916.6 620.8L916.2 624.3L915.8 627.9L915.5 631.4L915.2 634.9L915.0 638.4L914.8 641.9L914.7 645.4L914.6 648.9ZM1119.1 648.9L1119.0 645.4L1118.9 641.9L1118.7 638.4L1118.5 634.9L1118.3 631.4L1117.9 627.9L1117.6 624.3L1117.2 620.8L1116.7 617.3L1116.2 613.8L1115.6 610.3L1115.0 606.8L1114.4 603.3L1113.6 599.8L1134.2 599.8L1135.2 603.3L1136.1 606.8L1136.9 610.3L1137.6 613.8L1138.3 617.3L1138.9 620.8L1139.5 624.3L1140.0 627.9L1140.4 631.4L1140.7 634.9L1141.0 638.4L1141.2 641.9L1141.4 645.4L1141.5 648.9ZM907.3 648.9L907.4 645.4L907.5 641.9L907.7 638.4L907.9 634.9L908.1 631.4L908.5 627.9L908.8 624.3L909.2 620.8L909.7 617.3L910.2 613.8L910.8 610.3L911.4 606.8L912.0 603.3L912.8 599.8L892.2 599.8L891.2 603.3L890.3 606.8L889.5 610.3L888.8 613.8L888.1 617.3L887.5 620.8L886.9 624.3L886.4 627.9L886.0 631.4L885.7 634.9L885.4 638.4L885.2 641.9L885.0 645.4L884.9 648.9ZM1148.8 648.9L1148.7 645.4L1148.5 641.9L1148.3 638.4L1148.0 634.9L1147.7 631.4L1147.3 627.9L1146.8 624.3L1146.3 620.8L1145.7 617.3L1145.1 613.8L1144.4 610.3L1143.6 606.8L1142.7 603.3L1141.8 599.8L1162.4 599.8L1163.6 603.3L1164.7 606.8L1165.7 610.3L1166.6 613.8L1167.4 617.3L1168.2 620.8L1168.9 624.3L1169.4 627.9L1170.0 631.4L1170.4 634.9L1170.7 638.4L1171.0 641.9L1171.2 645.4L1171.3 648.9ZM877.6 648.9L877.7 645.4L877.9 641.9L878.1 638.4L878.4 634.9L878.7 631.4L879.1 627.9L879.6 624.3L880.1 620.8L880.7 617.3L881.3 613.8L882.0 610.3L882.8 606.8L883.7 603.3L884.6 599.8L864.0 599.8L862.8 603.3L861.7 606.8L860.7 610.3L859.8 613.8L859.0 617.3L858.2 620.8L857.5 624.3L857.0 627.9L856.4 631.4L856.0 634.9L855.7 638.4L855.4 641.9L855.2 645.4L855.1 648.9ZM1004.6 592.4L1004.8 588.9L1004.9 585.4L1005.0 581.9L1005.2 578.4L1005.3 574.9L1005.5 571.4L1005.6 567.9L1005.8 564.5L1006.0 561.0L1006.2 557.5L1006.4 554.0L1006.6 550.5L1006.9 547.0L1007.1 543.5L1019.3 543.5L1019.5 547.0L1019.8 550.5L1020.0 554.0L1020.2 557.5L1020.4 561.0L1020.6 564.5L1020.8 567.9L1020.9 571.4L1021.1 574.9L1021.2 578.4L1021.4 581.9L1021.5 585.4L1021.6 588.9L1021.8 592.4ZM1029.1 592.4L1028.9 588.9L1028.8 585.4L1028.7 581.9L1028.5 578.4L1028.4 574.9L1028.2 571.4L1028.1 567.9L1027.9 564.5L1027.7 561.0L1027.5 557.5L1027.3 554.0L1027.1 550.5L1026.8 547.0L1026.6 543.5L1041.1 543.5L1042.0 547.0L1042.7 550.5L1043.5 554.0L1044.2 557.5L1044.8 561.0L1045.5 564.5L1046.1 567.9L1046.6 571.4L1047.1 574.9L1047.6 578.4L1048.1 581.9L1048.5 585.4L1048.9 588.9L1049.3 592.4ZM997.3 592.4L997.5 588.9L997.6 585.4L997.7 581.9L997.9 578.4L998.0 574.9L998.2 571.4L998.3 567.9L998.5 564.5L998.7 561.0L998.9 557.5L999.1 554.0L999.3 550.5L999.6 547.0L999.8 543.5L985.3 543.5L984.4 547.0L983.7 550.5L982.9 554.0L982.2 557.5L981.6 561.0L980.9 564.5L980.3 567.9L979.8 571.4L979.3 574.9L978.8 578.4L978.3 581.9L977.9 585.4L977.5 588.9L977.1 592.4ZM1056.7 592.4L1056.3 588.9L1055.9 585.4L1055.5 581.9L1055.0 578.4L1054.5 574.9L1054.0 571.4L1053.4 567.9L1052.9 564.5L1052.3 561.0L1051.6 557.5L1050.9 554.0L1050.2 550.5L1049.4 547.0L1048.6 543.5L1062.9 543.5L1064.3 547.0L1065.7 550.5L1066.9 554.0L1068.1 557.5L1069.2 561.0L1070.3 564.5L1071.3 567.9L1072.2 571.4L1073.1 574.9L1074.0 578.4L1074.8 581.9L1075.5 585.4L1076.2 588.9L1076.9 592.4ZM969.7 592.4L970.1 588.9L970.5 585.4L970.9 581.9L971.4 578.4L971.9 574.9L972.4 571.4L973.0 567.9L973.5 564.5L974.1 561.0L974.8 557.5L975.5 554.0L976.2 550.5L977.0 547.0L977.8 543.5L963.5 543.5L962.1 547.0L960.7 550.5L959.5 554.0L958.3 557.5L957.2 561.0L956.1 564.5L955.1 567.9L954.2 571.4L953.3 574.9L952.4 578.4L951.6 581.9L950.9 585.4L950.2 588.9L949.5 592.4ZM1084.3 592.4L1083.7 588.9L1083.0 585.4L1082.2 581.9L1081.5 578.4L1080.7 574.9L1079.8 571.4L1078.9 567.9L1077.9 564.5L1076.9 561.0L1075.8 557.5L1074.6 554.0L1073.4 550.5L1072.1 547.0L1070.8 543.5L1084.6 543.5L1086.6 547.0L1088.5 550.5L1090.3 554.0L1092.0 557.5L1093.6 561.0L1095.1 564.5L1096.5 567.9L1097.8 571.4L1099.1 574.9L1100.3 578.4L1101.4 581.9L1102.5 585.4L1103.5 588.9L1104.4 592.4ZM942.1 592.4L942.7 588.9L943.4 585.4L944.2 581.9L944.9 578.4L945.7 574.9L946.6 571.4L947.5 567.9L948.5 564.5L949.5 561.0L950.6 557.5L951.8 554.0L953.0 550.5L954.3 547.0L955.6 543.5L941.8 543.5L939.8 547.0L937.9 550.5L936.1 554.0L934.4 557.5L932.8 561.0L931.3 564.5L929.9 567.9L928.6 571.4L927.3 574.9L926.1 578.4L925.0 581.9L923.9 585.4L922.9 588.9L922.0 592.4ZM1111.9 592.4L1111.0 588.9L1110.1 585.4L1109.1 581.9L1108.0 578.4L1106.8 574.9L1105.6 571.4L1104.3 567.9L1103.0 564.5L1101.5 561.0L1100.0 557.5L1098.4 554.0L1096.7 550.5L1094.9 547.0L1093.0 543.5L1106.2 543.5L1108.8 547.0L1111.3 550.5L1113.6 554.0L1115.8 557.5L1117.9 561.0L1119.8 564.5L1121.7 567.9L1123.4 571.4L1125.1 574.9L1126.6 578.4L1128.1 581.9L1129.4 585.4L1130.7 588.9L1131.9 592.4ZM914.5 592.4L915.4 588.9L916.3 585.4L917.3 581.9L918.4 578.4L919.6 574.9L920.8 571.4L922.1 567.9L923.4 564.5L924.9 561.0L926.4 557.5L928.0 554.0L929.7 550.5L931.5 547.0L933.4 543.5L920.2 543.5L917.6 547.0L915.1 550.5L912.8 554.0L910.6 557.5L908.5 561.0L906.6 564.5L904.7 567.9L903.0 571.4L901.3 574.9L899.8 578.4L898.3 581.9L897.0 585.4L895.7 588.9L894.5 592.4ZM1139.6 592.4L1138.4 588.9L1137.2 585.4L1135.9 581.9L1134.5 578.4L1133.0 574.9L1131.5 571.4L1129.8 567.9L1128.1 564.5L1126.2 561.0L1124.3 557.5L1122.2 554.0L1120.0 550.5L1117.7 547.0L1115.3 543.5L1128.0 543.5L1131.2 547.0L1134.2 550.5L1137.1 554.0L1139.8 557.5L1142.3 561.0L1144.7 564.5L1147.0 567.9L1149.1 571.4L1151.1 574.9L1153.0 578.4L1154.8 581.9L1156.5 585.4L1158.1 588.9L1159.6 592.4ZM886.8 592.4L888.0 588.9L889.2 585.4L890.5 581.9L891.9 578.4L893.4 574.9L894.9 571.4L896.6 567.9L898.3 564.5L900.2 561.0L902.1 557.5L904.2 554.0L906.4 550.5L908.7 547.0L911.1 543.5L898.4 543.5L895.2 547.0L892.2 550.5L889.3 554.0L886.6 557.5L884.1 561.0L881.7 564.5L879.4 567.9L877.3 571.4L875.3 574.9L873.4 578.4L871.6 581.9L869.9 585.4L868.3 588.9L866.8 592.4ZM1007.8 535.2L1008.0 533.3L1008.1 531.4L1008.3 529.5L1008.5 527.7L1008.7 525.8L1008.9 523.9L1009.1 522.0L1009.3 520.1L1009.5 518.2L1009.8 516.3L1010.0 514.5L1010.0 514.3L1010.1 514.2L1010.1 514.0L1010.1 513.9L1010.1 513.7L1010.1 513.6L1010.2 513.4L1016.2 513.4L1016.3 513.6L1016.3 513.7L1016.3 513.9L1016.3 514.0L1016.3 514.2L1016.4 514.3L1016.4 514.5L1016.6 516.3L1016.9 518.2L1017.1 520.1L1017.3 522.0L1017.5 523.9L1017.7 525.8L1017.9 527.7L1018.1 529.5L1018.3 531.4L1018.4 533.3L1018.6 535.2ZM1025.9 535.2L1025.8 533.3L1025.6 531.4L1025.4 529.5L1025.2 527.7L1025.0 525.8L1024.9 523.9L1024.7 522.0L1024.4 520.1L1024.2 518.2L1024.0 516.3L1023.7 514.5L1023.7 514.3L1023.7 514.2L1023.7 514.0L1023.7 513.9L1023.6 513.7L1023.6 513.6L1023.6 513.4L1023.6 513.3L1031.0 513.3L1031.1 513.4L1031.2 513.6L1031.2 513.7L1031.3 513.9L1031.4 514.0L1031.5 514.2L1031.5 514.3L1031.6 514.5L1032.4 516.3L1033.2 518.2L1033.9 520.1L1034.7 522.0L1035.3 523.9L1036.0 525.8L1036.6 527.7L1037.2 529.5L1037.8 531.4L1038.4 533.3L1038.9 535.2ZM1000.5 535.2L1000.6 533.3L1000.8 531.4L1001.0 529.5L1001.2 527.7L1001.4 525.8L1001.5 523.9L1001.7 522.0L1002.0 520.1L1002.2 518.2L1002.4 516.3L1002.7 514.5L1002.7 514.3L1002.7 514.2L1002.7 514.0L1002.7 513.9L1002.8 513.7L1002.8 513.6L1002.8 513.4L1002.8 513.3L995.4 513.3L995.3 513.4L995.2 513.6L995.2 513.7L995.1 513.9L995.0 514.0L994.9 514.2L994.9 514.3L994.8 514.5L994.0 516.3L993.2 518.2L992.5 520.1L991.7 522.0L991.1 523.9L990.4 525.8L989.8 527.7L989.2 529.5L988.6 531.4L988.0 533.3L987.5 535.2ZM1046.5 535.2L1046.0 533.3L1045.5 531.4L1044.9 529.5L1044.3 527.7L1043.7 525.8L1043.1 523.9L1042.4 522.0L1041.8 520.1L1041.0 518.2L1040.3 516.3L1039.5 514.5L1039.5 514.3L1039.4 514.2L1039.4 514.0L1039.3 513.9L1039.2 513.7L1039.2 513.6L1039.1 513.4L1039.0 513.3L1039.0 513.1L1038.9 513.0L1038.8 512.8L1038.8 512.7L1045.1 512.7L1045.2 512.8L1045.3 513.0L1045.5 513.1L1045.6 513.3L1045.7 513.4L1045.8 513.6L1046.0 513.7L1046.1 513.9L1046.2 514.0L1046.3 514.2L1046.4 514.3L1046.5 514.5L1048.0 516.3L1049.3 518.2L1050.6 520.1L1051.8 522.0L1053.0 523.9L1054.1 525.8L1055.2 527.7L1056.3 529.5L1057.3 531.4L1058.2 533.3L1059.2 535.2ZM979.9 535.2L980.4 533.3L980.9 531.4L981.5 529.5L982.1 527.7L982.7 525.8L983.3 523.9L984.0 522.0L984.6 520.1L985.4 518.2L986.1 516.3L986.9 514.5L986.9 514.3L987.0 514.2L987.0 514.0L987.1 513.9L987.2 513.7L987.2 513.6L987.3 513.4L987.4 513.3L987.4 513.1L987.5 513.0L987.6 512.8L987.6 512.7L981.3 512.7L981.2 512.8L981.1 513.0L980.9 513.1L980.8 513.3L980.7 513.4L980.6 513.6L980.4 513.7L980.3 513.9L980.2 514.0L980.1 514.2L980.0 514.3L979.9 514.5L978.4 516.3L977.1 518.2L975.8 520.1L974.6 522.0L973.4 523.9L972.3 525.8L971.2 527.7L970.1 529.5L969.1 531.4L968.2 533.3L967.2 535.2ZM1067.2 535.2L1066.4 533.3L1065.4 531.4L1064.5 529.5L1063.5 527.7L1062.5 525.8L1061.5 523.9L1060.4 522.0L1059.3 520.1L1058.1 518.2L1056.9 516.3L1055.6 514.5L1054.3 512.6L1054.2 512.4L1054.0 512.3L1053.9 512.1L1053.8 512.0L1053.7 511.8L1053.6 511.7L1058.1 511.7L1058.3 511.8L1058.5 512.0L1058.6 512.1L1058.8 512.3L1059.0 512.4L1059.2 512.6L1061.3 514.5L1063.3 516.3L1065.3 518.2L1067.1 520.1L1068.9 522.0L1070.5 523.9L1072.1 525.8L1073.7 527.7L1075.2 529.5L1076.6 531.4L1078.0 533.3L1079.3 535.2ZM959.2 535.2L960.0 533.3L961.0 531.4L961.9 529.5L962.9 527.7L963.9 525.8L964.9 523.9L966.0 522.0L967.1 520.1L968.3 518.2L969.5 516.3L970.8 514.5L972.1 512.6L972.2 512.4L972.4 512.3L972.5 512.1L972.6 512.0L972.7 511.8L972.8 511.7L968.3 511.7L968.1 511.8L967.9 512.0L967.8 512.1L967.6 512.3L967.4 512.4L967.2 512.6L965.1 514.5L963.1 516.3L961.1 518.2L959.3 520.1L957.5 522.0L955.9 523.9L954.3 525.8L952.7 527.7L951.2 529.5L949.8 531.4L948.4 533.3L947.1 535.2ZM1088.0 535.2L1086.8 533.3L1085.5 531.4L1084.2 529.5L1082.9 527.7L1081.5 525.8L1080.0 523.9L1078.5 522.0L1076.9 520.1L1075.3 518.2L1073.6 516.3L1071.8 514.5L1070.0 512.6L1068.0 510.7L1067.9 510.5L1067.7 510.4L1069.7 510.4L1070.0 510.5L1070.2 510.7L1073.2 512.6L1076.0 514.5L1078.6 516.3L1081.1 518.2L1083.5 520.1L1085.8 522.0L1088.0 523.9L1090.0 525.8L1092.0 527.7L1094.0 529.5L1095.8 531.4L1097.6 533.3L1099.3 535.2ZM938.4 535.2L939.6 533.3L940.9 531.4L942.2 529.5L943.5 527.7L944.9 525.8L946.4 523.9L947.9 522.0L949.5 520.1L951.1 518.2L952.8 516.3L954.6 514.5L956.4 512.6L958.4 510.7L958.5 510.5L958.7 510.4L956.7 510.4L956.4 510.5L956.2 510.7L953.2 512.6L950.4 514.5L947.8 516.3L945.3 518.2L942.9 520.1L940.6 522.0L938.4 523.9L936.4 525.8L934.4 527.7L932.4 529.5L930.6 531.4L928.8 533.3L927.1 535.2ZM1108.9 535.2L1107.4 533.3L1105.7 531.4L1104.1 529.5L1102.3 527.7L1100.5 525.8L1098.6 523.9L1096.7 522.0L1094.7 520.1L1092.6 518.2L1090.4 516.3L1088.2 514.5L1085.8 512.6L1083.3 510.7L1083.1 510.5L1083.3 510.5L1083.6 510.7L1087.3 512.6L1090.7 514.5L1094.0 516.3L1097.1 518.2L1100.0 520.1L1102.8 522.0L1105.5 523.9L1108.1 525.8L1110.5 527.7L1112.9 529.5L1115.2 531.4L1117.4 533.3L1119.5 535.2ZM917.5 535.2L919.0 533.3L920.7 531.4L922.3 529.5L924.1 527.7L925.9 525.8L927.8 523.9L929.7 522.0L931.7 520.1L933.8 518.2L936.0 516.3L938.2 514.5L940.6 512.6L943.1 510.7L943.3 510.5L943.1 510.5L942.8 510.7L939.1 512.6L935.7 514.5L932.4 516.3L929.3 518.2L926.4 520.1L923.6 522.0L920.9 523.9L918.3 525.8L915.9 527.7L913.5 529.5L911.2 531.4L909.0 533.3L906.9 535.2ZM1003.7 655.7L1003.7 659.2L1003.7 662.7L1003.7 666.2L1003.8 669.7L1003.8 673.2L1003.9 676.7L1003.9 680.2L1004.0 683.8L1004.0 687.3L1004.1 690.8L1004.2 694.3L1004.2 697.8L1004.3 701.3L1004.4 704.8L1022.0 704.8L1022.1 701.3L1022.2 697.8L1022.2 694.3L1022.3 690.8L1022.4 687.3L1022.4 683.8L1022.5 680.2L1022.5 676.7L1022.6 673.2L1022.6 669.7L1022.7 666.2L1022.7 662.7L1022.7 659.2L1022.7 655.7ZM1030.0 655.7L1030.0 659.2L1030.0 662.7L1030.0 666.2L1029.9 669.7L1029.9 673.2L1029.8 676.7L1029.8 680.2L1029.7 683.8L1029.7 687.3L1029.6 690.8L1029.5 694.3L1029.5 697.8L1029.4 701.3L1029.3 704.8L1050.1 704.8L1050.4 701.3L1050.7 697.8L1050.9 694.3L1051.2 690.8L1051.4 687.3L1051.6 683.8L1051.8 680.2L1051.9 676.7L1052.0 673.2L1052.1 669.7L1052.2 666.2L1052.3 662.7L1052.4 659.2L1052.4 655.7ZM996.4 655.7L996.4 659.2L996.4 662.7L996.4 666.2L996.5 669.7L996.5 673.2L996.6 676.7L996.6 680.2L996.7 683.8L996.7 687.3L996.8 690.8L996.9 694.3L996.9 697.8L997.0 701.3L997.1 704.8L976.3 704.8L976.0 701.3L975.7 697.8L975.5 694.3L975.2 690.8L975.0 687.3L974.8 683.8L974.6 680.2L974.5 676.7L974.4 673.2L974.3 669.7L974.2 666.2L974.1 662.7L974.0 659.2L974.0 655.7ZM1059.7 655.7L1059.7 659.2L1059.6 662.7L1059.5 666.2L1059.5 669.7L1059.3 673.2L1059.2 676.7L1059.1 680.2L1058.9 683.8L1058.7 687.3L1058.5 690.8L1058.2 694.3L1058.0 697.8L1057.7 701.3L1057.4 704.8L1078.1 704.8L1078.6 701.3L1079.1 697.8L1079.6 694.3L1080.0 690.8L1080.4 687.3L1080.7 683.8L1081.0 680.2L1081.3 676.7L1081.5 673.2L1081.7 669.7L1081.8 666.2L1081.9 662.7L1082.0 659.2L1082.1 655.7ZM966.7 655.7L966.7 659.2L966.8 662.7L966.9 666.2L966.9 669.7L967.1 673.2L967.2 676.7L967.3 680.2L967.5 683.8L967.7 687.3L967.9 690.8L968.2 694.3L968.4 697.8L968.7 701.3L969.0 704.8L948.3 704.8L947.8 701.3L947.3 697.8L946.8 694.3L946.4 690.8L946.0 687.3L945.7 683.8L945.4 680.2L945.1 676.7L944.9 673.2L944.7 669.7L944.6 666.2L944.5 662.7L944.4 659.2L944.3 655.7ZM1089.4 655.7L1089.3 659.2L1089.3 662.7L1089.1 666.2L1089.0 669.7L1088.8 673.2L1088.6 676.7L1088.3 680.2L1088.0 683.8L1087.7 687.3L1087.3 690.8L1086.9 694.3L1086.5 697.8L1086.0 701.3L1085.5 704.8L1106.2 704.8L1106.9 701.3L1107.6 697.8L1108.2 694.3L1108.8 690.8L1109.3 687.3L1109.8 683.8L1110.2 680.2L1110.6 676.7L1110.9 673.2L1111.2 669.7L1111.4 666.2L1111.6 662.7L1111.7 659.2L1111.8 655.7ZM937.0 655.7L937.1 659.2L937.1 662.7L937.3 666.2L937.4 669.7L937.6 673.2L937.8 676.7L938.1 680.2L938.4 683.8L938.7 687.3L939.1 690.8L939.5 694.3L939.9 697.8L940.4 701.3L940.9 704.8L920.2 704.8L919.5 701.3L918.8 697.8L918.2 694.3L917.6 690.8L917.1 687.3L916.6 683.8L916.2 680.2L915.8 676.7L915.5 673.2L915.2 669.7L915.0 666.2L914.8 662.7L914.7 659.2L914.6 655.7ZM1119.1 655.7L1119.0 659.2L1118.9 662.7L1118.7 666.2L1118.5 669.7L1118.3 673.2L1117.9 676.7L1117.6 680.2L1117.2 683.8L1116.7 687.3L1116.2 690.8L1115.6 694.3L1115.0 697.8L1114.4 701.3L1113.6 704.8L1134.2 704.8L1135.2 701.3L1136.1 697.8L1136.9 694.3L1137.6 690.8L1138.3 687.3L1138.9 683.8L1139.5 680.2L1140.0 676.7L1140.4 673.2L1140.7 669.7L1141.0 666.2L1141.2 662.7L1141.4 659.2L1141.5 655.7ZM907.3 655.7L907.4 659.2L907.5 662.7L907.7 666.2L907.9 669.7L908.1 673.2L908.5 676.7L908.8 680.2L909.2 683.8L909.7 687.3L910.2 690.8L910.8 694.3L911.4 697.8L912.0 701.3L912.8 704.8L892.2 704.8L891.2 701.3L890.3 697.8L889.5 694.3L888.8 690.8L888.1 687.3L887.5 683.8L886.9 680.2L886.4 676.7L886.0 673.2L885.7 669.7L885.4 666.2L885.2 662.7L885.0 659.2L884.9 655.7ZM1148.8 655.7L1148.7 659.2L1148.5 662.7L1148.3 666.2L1148.0 669.7L1147.7 673.2L1147.3 676.7L1146.8 680.2L1146.3 683.8L1145.7 687.3L1145.1 690.8L1144.4 694.3L1143.6 697.8L1142.7 701.3L1141.8 704.8L1162.4 704.8L1163.6 701.3L1164.7 697.8L1165.7 694.3L1166.6 690.8L1167.4 687.3L1168.2 683.8L1168.9 680.2L1169.4 676.7L1170.0 673.2L1170.4 669.7L1170.7 666.2L1171.0 662.7L1171.2 659.2L1171.3 655.7ZM877.6 655.7L877.7 659.2L877.9 662.7L878.1 666.2L878.4 669.7L878.7 673.2L879.1 676.7L879.6 680.2L880.1 683.8L880.7 687.3L881.3 690.8L882.0 694.3L882.8 697.8L883.7 701.3L884.6 704.8L864.0 704.8L862.8 701.3L861.7 697.8L860.7 694.3L859.8 690.8L859.0 687.3L858.2 683.8L857.5 680.2L857.0 676.7L856.4 673.2L856.0 669.7L855.7 666.2L855.4 662.7L855.2 659.2L855.1 655.7ZM1004.6 712.2L1004.8 715.7L1004.9 719.2L1005.0 722.7L1005.2 726.2L1005.3 729.7L1005.5 733.2L1005.6 736.6L1005.8 740.1L1006.0 743.6L1006.2 747.1L1006.4 750.6L1006.6 754.1L1006.9 757.6L1007.1 761.1L1019.3 761.1L1019.5 757.6L1019.8 754.1L1020.0 750.6L1020.2 747.1L1020.4 743.6L1020.6 740.1L1020.8 736.6L1020.9 733.2L1021.1 729.7L1021.2 726.2L1021.4 722.7L1021.5 719.2L1021.6 715.7L1021.8 712.2ZM1029.1 712.2L1028.9 715.7L1028.8 719.2L1028.7 722.7L1028.5 726.2L1028.4 729.7L1028.2 733.2L1028.1 736.6L1027.9 740.1L1027.7 743.6L1027.5 747.1L1027.3 750.6L1027.1 754.1L1026.8 757.6L1026.6 761.1L1041.1 761.1L1042.0 757.6L1042.7 754.1L1043.5 750.6L1044.2 747.1L1044.8 743.6L1045.5 740.1L1046.1 736.6L1046.6 733.2L1047.1 729.7L1047.6 726.2L1048.1 722.7L1048.5 719.2L1048.9 715.7L1049.3 712.2ZM997.3 712.2L997.5 715.7L997.6 719.2L997.7 722.7L997.9 726.2L998.0 729.7L998.2 733.2L998.3 736.6L998.5 740.1L998.7 743.6L998.9 747.1L999.1 750.6L999.3 754.1L999.6 757.6L999.8 761.1L985.3 761.1L984.4 757.6L983.7 754.1L982.9 750.6L982.2 747.1L981.6 743.6L980.9 740.1L980.3 736.6L979.8 733.2L979.3 729.7L978.8 726.2L978.3 722.7L977.9 719.2L977.5 715.7L977.1 712.2ZM1056.7 712.2L1056.3 715.7L1055.9 719.2L1055.5 722.7L1055.0 726.2L1054.5 729.7L1054.0 733.2L1053.4 736.6L1052.9 740.1L1052.3 743.6L1051.6 747.1L1050.9 750.6L1050.2 754.1L1049.4 757.6L1048.6 761.1L1062.9 761.1L1064.3 757.6L1065.7 754.1L1066.9 750.6L1068.1 747.1L1069.2 743.6L1070.3 740.1L1071.3 736.6L1072.2 733.2L1073.1 729.7L1074.0 726.2L1074.8 722.7L1075.5 719.2L1076.2 715.7L1076.9 712.2ZM969.7 712.2L970.1 715.7L970.5 719.2L970.9 722.7L971.4 726.2L971.9 729.7L972.4 733.2L973.0 736.6L973.5 740.1L974.1 743.6L974.8 747.1L975.5 750.6L976.2 754.1L977.0 757.6L977.8 761.1L963.5 761.1L962.1 757.6L960.7 754.1L959.5 750.6L958.3 747.1L957.2 743.6L956.1 740.1L955.1 736.6L954.2 733.2L953.3 729.7L952.4 726.2L951.6 722.7L950.9 719.2L950.2 715.7L949.5 712.2ZM1084.3 712.2L1083.7 715.7L1083.0 719.2L1082.2 722.7L1081.5 726.2L1080.7 729.7L1079.8 733.2L1078.9 736.6L1077.9 740.1L1076.9 743.6L1075.8 747.1L1074.6 750.6L1073.4 754.1L1072.1 757.6L1070.8 761.1L1084.6 761.1L1086.6 757.6L1088.5 754.1L1090.3 750.6L1092.0 747.1L1093.6 743.6L1095.1 740.1L1096.5 736.6L1097.8 733.2L1099.1 729.7L1100.3 726.2L1101.4 722.7L1102.5 719.2L1103.5 715.7L1104.4 712.2ZM942.1 712.2L942.7 715.7L943.4 719.2L944.2 722.7L944.9 726.2L945.7 729.7L946.6 733.2L947.5 736.6L948.5 740.1L949.5 743.6L950.6 747.1L951.8 750.6L953.0 754.1L954.3 757.6L955.6 761.1L941.8 761.1L939.8 757.6L937.9 754.1L936.1 750.6L934.4 747.1L932.8 743.6L931.3 740.1L929.9 736.6L928.6 733.2L927.3 729.7L926.1 726.2L925.0 722.7L923.9 719.2L922.9 715.7L922.0 712.2ZM1111.9 712.2L1111.0 715.7L1110.1 719.2L1109.1 722.7L1108.0 726.2L1106.8 729.7L1105.6 733.2L1104.3 736.6L1103.0 740.1L1101.5 743.6L1100.0 747.1L1098.4 750.6L1096.7 754.1L1094.9 757.6L1093.0 761.1L1106.2 761.1L1108.8 757.6L1111.3 754.1L1113.6 750.6L1115.8 747.1L1117.9 743.6L1119.8 740.1L1121.7 736.6L1123.4 733.2L1125.1 729.7L1126.6 726.2L1128.1 722.7L1129.4 719.2L1130.7 715.7L1131.9 712.2ZM914.5 712.2L915.4 715.7L916.3 719.2L917.3 722.7L918.4 726.2L919.6 729.7L920.8 733.2L922.1 736.6L923.4 740.1L924.9 743.6L926.4 747.1L928.0 750.6L929.7 754.1L931.5 757.6L933.4 761.1L920.2 761.1L917.6 757.6L915.1 754.1L912.8 750.6L910.6 747.1L908.5 743.6L906.6 740.1L904.7 736.6L903.0 733.2L901.3 729.7L899.8 726.2L898.3 722.7L897.0 719.2L895.7 715.7L894.5 712.2ZM1139.6 712.2L1138.4 715.7L1137.2 719.2L1135.9 722.7L1134.5 726.2L1133.0 729.7L1131.5 733.2L1129.8 736.6L1128.1 740.1L1126.2 743.6L1124.3 747.1L1122.2 750.6L1120.0 754.1L1117.7 757.6L1115.3 761.1L1128.0 761.1L1131.2 757.6L1134.2 754.1L1137.1 750.6L1139.8 747.1L1142.3 743.6L1144.7 740.1L1147.0 736.6L1149.1 733.2L1151.1 729.7L1153.0 726.2L1154.8 722.7L1156.5 719.2L1158.1 715.7L1159.6 712.2ZM886.8 712.2L888.0 715.7L889.2 719.2L890.5 722.7L891.9 726.2L893.4 729.7L894.9 733.2L896.6 736.6L898.3 740.1L900.2 743.6L902.1 747.1L904.2 750.6L906.4 754.1L908.7 757.6L911.1 761.1L898.4 761.1L895.2 757.6L892.2 754.1L889.3 750.6L886.6 747.1L884.1 743.6L881.7 740.1L879.4 736.6L877.3 733.2L875.3 729.7L873.4 726.2L871.6 722.7L869.9 719.2L868.3 715.7L866.8 712.2ZM1007.8 769.4L1008.0 771.3L1008.1 773.2L1008.3 775.1L1008.5 776.9L1008.7 778.8L1008.9 780.7L1009.1 782.6L1009.3 784.5L1009.5 786.4L1009.8 788.3L1010.0 790.1L1010.0 790.3L1010.1 790.4L1010.1 790.6L1010.1 790.7L1010.1 790.9L1010.1 791.0L1010.2 791.2L1016.2 791.2L1016.3 791.0L1016.3 790.9L1016.3 790.7L1016.3 790.6L1016.3 790.4L1016.4 790.3L1016.4 790.1L1016.6 788.3L1016.9 786.4L1017.1 784.5L1017.3 782.6L1017.5 780.7L1017.7 778.8L1017.9 776.9L1018.1 775.1L1018.3 773.2L1018.4 771.3L1018.6 769.4ZM1025.9 769.4L1025.8 771.3L1025.6 773.2L1025.4 775.1L1025.2 776.9L1025.0 778.8L1024.9 780.7L1024.7 782.6L1024.4 784.5L1024.2 786.4L1024.0 788.3L1023.7 790.1L1023.7 790.3L1023.7 790.4L1023.7 790.6L1023.7 790.7L1023.6 790.9L1023.6 791.0L1023.6 791.2L1023.6 791.3L1031.0 791.3L1031.1 791.2L1031.2 791.0L1031.2 790.9L1031.3 790.7L1031.4 790.6L1031.5 790.4L1031.5 790.3L1031.6 790.1L1032.4 788.3L1033.2 786.4L1033.9 784.5L1034.7 782.6L1035.3 780.7L1036.0 778.8L1036.6 776.9L1037.2 775.1L1037.8 773.2L1038.4 771.3L1038.9 769.4ZM1000.5 769.4L1000.6 771.3L1000.8 773.2L1001.0 775.1L1001.2 776.9L1001.4 778.8L1001.5 780.7L1001.7 782.6L1002.0 784.5L1002.2 786.4L1002.4 788.3L1002.7 790.1L1002.7 790.3L1002.7 790.4L1002.7 790.6L1002.7 790.7L1002.8 790.9L1002.8 791.0L1002.8 791.2L1002.8 791.3L995.4 791.3L995.3 791.2L995.2 791.0L995.2 790.9L995.1 790.7L995.0 790.6L994.9 790.4L994.9 790.3L994.8 790.1L994.0 788.3L993.2 786.4L992.5 784.5L991.7 782.6L991.1 780.7L990.4 778.8L989.8 776.9L989.2 775.1L988.6 773.2L988.0 771.3L987.5 769.4ZM1046.5 769.4L1046.0 771.3L1045.5 773.2L1044.9 775.1L1044.3 776.9L1043.7 778.8L1043.1 780.7L1042.4 782.6L1041.8 784.5L1041.0 786.4L1040.3 788.3L1039.5 790.1L1039.5 790.3L1039.4 790.4L1039.4 790.6L1039.3 790.7L1039.2 790.9L1039.2 791.0L1039.1 791.2L1039.0 791.3L1039.0 791.5L1038.9 791.6L1038.8 791.8L1038.8 791.9L1045.1 791.9L1045.2 791.8L1045.3 791.6L1045.5 791.5L1045.6 791.3L1045.7 791.2L1045.8 791.0L1046.0 790.9L1046.1 790.7L1046.2 790.6L1046.3 790.4L1046.4 790.3L1046.5 790.1L1048.0 788.3L1049.3 786.4L1050.6 784.5L1051.8 782.6L1053.0 780.7L1054.1 778.8L1055.2 776.9L1056.3 775.1L1057.3 773.2L1058.2 771.3L1059.2 769.4ZM979.9 769.4L980.4 771.3L980.9 773.2L981.5 775.1L982.1 776.9L982.7 778.8L983.3 780.7L984.0 782.6L984.6 784.5L985.4 786.4L986.1 788.3L986.9 790.1L986.9 790.3L987.0 790.4L987.0 790.6L987.1 790.7L987.2 790.9L987.2 791.0L987.3 791.2L987.4 791.3L987.4 791.5L987.5 791.6L987.6 791.8L987.6 791.9L981.3 791.9L981.2 791.8L981.1 791.6L980.9 791.5L980.8 791.3L980.7 791.2L980.6 791.0L980.4 790.9L980.3 790.7L980.2 790.6L980.1 790.4L980.0 790.3L979.9 790.1L978.4 788.3L977.1 786.4L975.8 784.5L974.6 782.6L973.4 780.7L972.3 778.8L971.2 776.9L970.1 775.1L969.1 773.2L968.2 771.3L967.2 769.4ZM1067.2 769.4L1066.4 771.3L1065.4 773.2L1064.5 775.1L1063.5 776.9L1062.5 778.8L1061.5 780.7L1060.4 782.6L1059.3 784.5L1058.1 786.4L1056.9 788.3L1055.6 790.1L1054.3 792.0L1054.2 792.2L1054.0 792.3L1053.9 792.5L1053.8 792.6L1053.7 792.8L1053.6 792.9L1058.1 792.9L1058.3 792.8L1058.5 792.6L1058.6 792.5L1058.8 792.3L1059.0 792.2L1059.2 792.0L1061.3 790.1L1063.3 788.3L1065.3 786.4L1067.1 784.5L1068.9 782.6L1070.5 780.7L1072.1 778.8L1073.7 776.9L1075.2 775.1L1076.6 773.2L1078.0 771.3L1079.3 769.4ZM959.2 769.4L960.0 771.3L961.0 773.2L961.9 775.1L962.9 776.9L963.9 778.8L964.9 780.7L966.0 782.6L967.1 784.5L968.3 786.4L969.5 788.3L970.8 790.1L972.1 792.0L972.2 792.2L972.4 792.3L972.5 792.5L972.6 792.6L972.7 792.8L972.8 792.9L968.3 792.9L968.1 792.8L967.9 792.6L967.8 792.5L967.6 792.3L967.4 792.2L967.2 792.0L965.1 790.1L963.1 788.3L961.1 786.4L959.3 784.5L957.5 782.6L955.9 780.7L954.3 778.8L952.7 776.9L951.2 775.1L949.8 773.2L948.4 771.3L947.1 769.4ZM1088.0 769.4L1086.8 771.3L1085.5 773.2L1084.2 775.1L1082.9 776.9L1081.5 778.8L1080.0 780.7L1078.5 782.6L1076.9 784.5L1075.3 786.4L1073.6 788.3L1071.8 790.1L1070.0 792.0L1068.0 793.9L1067.9 794.1L1067.7 794.2L1069.7 794.2L1070.0 794.1L1070.2 793.9L1073.2 792.0L1076.0 790.1L1078.6 788.3L1081.1 786.4L1083.5 784.5L1085.8 782.6L1088.0 780.7L1090.0 778.8L1092.0 776.9L1094.0 775.1L1095.8 773.2L1097.6 771.3L1099.3 769.4ZM938.4 769.4L939.6 771.3L940.9 773.2L942.2 775.1L943.5 776.9L944.9 778.8L946.4 780.7L947.9 782.6L949.5 784.5L951.1 786.4L952.8 788.3L954.6 790.1L956.4 792.0L958.4 793.9L958.5 794.1L958.7 794.2L956.7 794.2L956.4 794.1L956.2 793.9L953.2 792.0L950.4 790.1L947.8 788.3L945.3 786.4L942.9 784.5L940.6 782.6L938.4 780.7L936.4 778.8L934.4 776.9L932.4 775.1L930.6 773.2L928.8 771.3L927.1 769.4ZM1108.9 769.4L1107.4 771.3L1105.7 773.2L1104.1 775.1L1102.3 776.9L1100.5 778.8L1098.6 780.7L1096.7 782.6L1094.7 784.5L1092.6 786.4L1090.4 788.3L1088.2 790.1L1085.8 792.0L1083.3 793.9L1083.1 794.1L1083.3 794.1L1083.6 793.9L1087.3 792.0L1090.7 790.1L1094.0 788.3L1097.1 786.4L1100.0 784.5L1102.8 782.6L1105.5 780.7L1108.1 778.8L1110.5 776.9L1112.9 775.1L1115.2 773.2L1117.4 771.3L1119.5 769.4ZM917.5 769.4L919.0 771.3L920.7 773.2L922.3 775.1L924.1 776.9L925.9 778.8L927.8 780.7L929.7 782.6L931.7 784.5L933.8 786.4L936.0 788.3L938.2 790.1L940.6 792.0L943.1 793.9L943.3 794.1L943.1 794.1L942.8 793.9L939.1 792.0L935.7 790.1L932.4 788.3L929.3 786.4L926.4 784.5L923.6 782.6L920.9 780.7L918.3 778.8L915.9 776.9L913.5 775.1L911.2 773.2L909.0 771.3L906.9 769.4Z" fill="none" stroke="#383838" stroke-width="1.2" stroke-linejoin="miter"/><path d="M532.8 862.5L534.2 861.5L548.8 861.2L564.3 861.2L572.0 860.8L577.8 858.1L581.2 854.2L579.8 852.3L576.9 850.8L574.9 848.9L577.8 849.4L581.7 850.8L584.6 849.4L587.5 848.9L590.2 847.6L589.0 850.8L586.6 853.3L583.6 854.2L582.2 858.1L581.2 862.0L577.8 866.3L573.0 869.7L566.2 872.6L559.4 874.1L555.5 875.1L555.1 877.5L552.6 875.5L546.8 873.6L541.0 871.2L536.6 868.3L534.2 865.4ZM539.1 863.4L543.4 864.1L547.3 866.3L548.8 866.0L545.9 864.1M546.3 848.4L548.8 847.0L551.7 847.9L553.1 850.8L552.6 854.2L554.6 856.2L554.1 858.1L550.7 855.2L548.3 851.8ZM553.6 845.5L556.5 845.0L560.4 844.5L559.9 847.0L557.5 848.4L558.4 850.8L557.0 853.3L555.5 855.2L554.1 852.8L553.1 849.4ZM560.4 850.8L564.3 851.3L566.2 853.3L564.3 855.7L561.8 854.2ZM561.4 846.0L565.2 844.5L569.6 845.5L568.1 848.4L566.2 850.8L563.8 848.9L561.8 847.9ZM522.6 915.3L527.4 912.8L530.8 911.4L532.3 908.5L529.4 907.5L526.5 907.0L526.0 904.6L523.1 903.6L521.6 902.2L519.7 901.2L520.7 898.8L522.6 897.3L526.0 896.9L527.4 895.4L526.0 893.5L522.6 893.5L519.7 893.0L517.8 891.5L520.2 890.6L524.5 890.1L527.4 889.3L524.5 888.6L522.6 887.7L520.7 886.2L518.7 884.3L521.6 882.3L526.5 879.9L532.3 877.5L539.1 878.4L545.9 879.9L552.6 880.9L558.4 882.3L562.3 883.1L568.1 881.8L573.0 880.4L576.9 879.6L581.7 880.9L586.6 880.9L591.4 882.3L595.3 883.8L595.8 885.7L600.1 886.0L604.5 886.2L605.4 888.1L606.4 884.7L609.8 884.3L614.7 885.2L619.5 885.7L622.4 886.2L623.9 887.7L625.3 884.3M522.6 915.3L525.5 914.3L529.4 912.4L534.2 909.0L539.1 905.6L542.0 902.2L540.5 904.6L541.5 906.1L543.4 903.6L545.4 902.2L548.8 902.7L553.6 904.6L558.4 905.1L562.3 907.5L566.2 909.0L569.1 912.4L572.0 915.3L574.9 918.7L576.9 922.1L579.8 924.5L582.7 926.9L584.6 929.8L582.2 929.8L581.7 932.7L581.7 940.0M539.1 912.4L541.0 909.9L545.9 908.0L550.7 909.0L554.6 911.4L557.5 914.3L559.4 917.7L560.4 921.6L562.8 925.4L565.2 928.8L567.2 932.7L568.1 936.6L568.1 940.0M539.1 912.4L542.9 911.9L546.8 913.3L549.7 916.2L548.8 920.1L548.3 923.0L550.7 925.4L551.2 928.8L551.7 932.7L550.7 936.6L551.7 940.0M631.6 844.5L636.5 842.9L643.4 842.2L645.7 840.7L650.2 839.5L657.1 839.5L664.7 839.5L671.9 840.7L672.7 842.2L670.0 845.2L666.2 847.9L660.9 850.2L656.3 852.8L652.9 854.4L652.5 856.3L650.2 857.4L648.7 859.3L647.6 862.0L644.9 862.4L641.1 862.0L636.5 861.6L633.5 861.2L635.8 858.9L638.1 858.2L639.6 855.9L637.3 855.9L638.8 853.6L640.0 851.7L638.1 851.3L636.5 850.6L640.3 849.4L644.9 848.7L641.1 848.3L636.5 849.0L633.5 847.1ZM622.8 850.2L625.1 846.4L627.4 846.0L630.5 847.1L634.3 849.0L636.5 850.9L638.8 852.1L635.8 854.4L632.7 856.3L629.7 856.6L627.4 854.7L625.9 852.8ZM608.8 852.8L612.2 852.7L616.4 853.6L618.7 857.4L615.6 856.3L612.2 855.5L609.5 855.1ZM612.9 864.3L615.6 861.6L620.6 861.4L621.7 864.6L620.2 867.3L617.9 866.2L616.0 864.3ZM613.7 873.8L615.2 869.6L620.9 869.4L622.8 873.4L619.4 877.2L616.4 874.9ZM622.1 860.1L625.9 860.5L628.9 861.2L631.2 863.9L635.8 864.6L641.1 864.6L645.7 864.6L647.6 865.8L645.7 868.1L643.4 867.3L639.6 867.7L635.8 867.3L632.7 867.7L630.5 866.5L628.9 864.3L627.4 862.7L625.1 862.7L622.8 861.6ZM624.5 868.8L629.3 869.0L632.0 869.6L629.7 871.5L626.6 874.2L624.7 874.9ZM632.7 874.2L634.3 871.1L638.1 870.0L642.6 870.0L645.7 871.5L646.4 874.5L644.2 875.7L642.6 873.4L640.3 872.6L640.0 875.7L639.6 877.6L636.5 878.7L633.9 877.2ZM637.3 872.3L637.7 876.4L639.2 876.4M591.9 865.9L594.3 862.9L599.1 862.5L602.5 860.5L605.4 862.0L608.4 863.9L606.9 865.9L603.0 866.3L599.1 868.3L596.2 866.8L593.3 866.3ZM581.2 869.2L586.6 868.3L590.4 868.8L592.4 870.2L589.5 872.2L586.6 875.1L583.6 876.5L580.3 874.1L581.2 871.7ZM600.0 873.4L603.8 871.5L607.2 871.5L609.1 873.4L609.9 876.4L612.2 878.7L614.5 880.2L613.7 882.5L610.7 883.3L607.6 884.0L603.8 884.4L600.0 884.2M595.8 885.7L595.3 884.7L597.2 884.3L594.3 880.4L598.2 879.6L594.3 878.4L591.9 877.0L589.5 874.1L592.4 871.7L596.2 872.2L601.1 873.6L605.0 874.1L605.9 871.7L607.9 872.2L608.8 875.5L611.7 878.4M625.3 884.3L626.6 882.5L624.4 879.9L622.8 877.2L625.1 875.7L628.2 879.5L632.0 883.3L635.8 887.1L638.8 884.8L639.6 881.0L644.2 881.8L645.7 883.3L643.8 885.6L643.4 887.9L640.3 889.4L638.1 890.9L635.8 892.4L633.5 894.7L630.5 895.5L627.8 897.0L625.9 900.0L625.1 903.8L626.6 906.9L628.2 910.7L632.7 912.2L638.1 914.5L642.6 916.0M646.4 874.5L649.5 873.4L653.3 873.4L656.3 875.7L659.4 876.4L663.2 879.5L666.2 882.5L664.7 884.0L668.5 885.6L673.1 887.9L674.2 890.1L671.6 890.9L670.8 893.2L668.5 890.9L667.0 890.1L665.5 891.7L668.5 893.2L669.3 896.2L667.0 898.5L666.2 900.8L663.2 898.5L660.1 897.0L656.3 894.7L653.3 893.9L650.2 893.9L650.2 892.0L653.3 890.9L656.3 890.1L657.1 887.1L654.8 884.8L652.5 881.8L649.5 880.2L646.4 881.0L643.4 881.8M671.9 846.4L676.1 844.5L680.7 842.9L686.0 843.3L691.4 842.2L697.4 842.9L699.0 839.9L705.1 839.1L710.0 837.6M671.9 846.4L668.5 849.8L669.7 850.9L668.5 852.8L664.7 854.4L660.9 855.9L658.2 856.3L660.1 858.2L663.2 859.3L660.9 859.7L663.2 862.0L666.2 863.1L670.0 862.7L673.1 862.4L676.9 863.5L680.7 866.2L683.4 869.6L684.9 872.6L684.5 875.7L687.5 876.1L689.8 878.0L689.1 880.2L690.6 882.5L688.3 884.8L686.8 887.1L686.0 890.1L688.3 893.2L690.6 894.3L690.6 896.2L692.9 898.5L694.4 901.6L697.4 902.3L700.5 904.2L702.0 901.6L702.8 897.0L705.1 893.2L708.1 890.1L710.0 889.4M679.6 877.2L681.1 877.6L679.9 880.6L678.8 883.3L678.4 881.0ZM679.2 887.9L681.5 888.6L680.7 891.7L679.2 893.9L677.6 892.4L678.0 889.8ZM679.9 897.0L683.0 894.7L685.3 896.2L686.0 899.3L687.5 901.6L687.2 905.4L685.3 906.9L683.0 904.6L681.5 905.0L680.7 903.1L683.0 901.6L681.8 898.9ZM633.5 900.8L635.8 898.9L637.3 899.3L641.1 899.7L644.9 898.1L648.3 899.7L648.7 901.9L645.7 903.8L642.6 905.4L638.8 905.0L636.5 903.5L634.3 902.3ZM653.3 898.9L657.9 899.7L660.9 901.6L663.2 904.2L662.4 906.9L664.7 908.0L667.0 906.9L668.5 905.4L668.9 903.1L671.6 906.1L674.6 910.7L677.6 916.0M710.0 837.6L715.2 837.6L722.1 837.6L725.1 839.5L730.5 840.3L732.0 841.8L728.9 842.6L725.1 843.7L728.2 844.1L731.2 846.0L733.5 844.8L739.6 843.7L744.9 843.6L746.1 844.8L744.5 847.1L741.5 847.9L739.6 850.2L737.3 852.1L735.0 854.4L734.3 856.3L736.5 857.8L737.3 859.3L734.6 860.5L734.3 862.7L736.2 864.6L735.8 867.3L733.5 868.1L734.6 870.0L732.0 870.3L728.9 870.7L727.8 872.6L729.7 874.9L732.7 875.7L733.1 878.3L730.5 879.5L727.4 878.0L725.1 878.3L728.2 879.5L729.3 881.8L726.6 883.3L723.6 884.4L719.0 884.8L716.0 887.9L711.4 889.8L710.0 889.4M700.0 908.4L703.0 905.4L706.9 902.3L711.4 900.0L715.2 897.8L719.8 896.6L725.9 896.6L728.2 898.9L732.0 900.4L735.8 900.8L738.8 903.1L742.6 905.0L745.7 907.6L747.6 909.2L746.8 905.4L748.0 902.7L750.2 902.3L750.6 905.0L753.3 905.0L757.9 903.1L762.4 901.6L766.2 902.7L770.0 903.1L772.3 900.0L776.1 899.3L779.9 900.0L783.7 902.7L784.9 903.1L783.0 899.3L781.1 896.2L783.0 893.6L785.3 890.9L789.8 890.5L792.5 893.2L791.4 896.2L790.6 900.0L792.5 903.1L791.0 906.1L787.5 907.6L785.3 907.3L788.3 908.4L791.4 907.3L793.6 904.2L795.2 901.6L797.4 901.2L798.2 904.2L799.7 905.4L797.4 903.1L795.5 898.5L794.4 894.7L798.2 893.2L801.2 890.9L804.3 893.2L805.1 890.1L810.0 887.9M738.1 855.1L740.3 854.4L743.4 857.0L747.2 860.5L750.2 863.9L753.3 866.5L754.4 869.6L754.8 871.5L759.4 872.6L763.2 874.2L767.0 874.5L766.6 875.7L761.7 875.5L757.1 874.5L753.7 874.2L752.5 872.3L749.5 869.6L746.4 866.5L744.2 862.7L741.5 858.9L738.8 856.6ZM758.2 861.2L760.9 860.1L764.7 857.4L767.8 854.4L770.4 852.2L773.8 854.7L772.3 858.2L771.9 861.2L770.0 864.3L769.3 867.3L767.8 869.6L764.7 867.3L761.7 867.3L759.4 864.6ZM774.2 862.0L776.9 861.2L782.2 860.5L780.7 862.7L778.4 863.9L779.2 866.5L777.6 867.7L779.2 869.6L776.1 869.2L775.4 871.5L774.2 868.8L773.5 865.8ZM777.3 875.3L779.9 873.8L785.3 873.2L788.3 872.3L793.3 873.5L792.9 875.7L786.0 875.7L780.7 875.7ZM785.3 879.5L780.7 879.1L775.4 880.2L770.0 881.8L766.2 884.0L763.2 887.9L760.9 891.7L759.8 893.9L761.7 896.2L764.7 897.4L767.4 897.8L767.0 895.5L764.7 893.2L764.7 890.1L767.0 887.9L770.0 885.6L773.1 883.3L776.9 882.5L780.7 881.8L783.7 881.0ZM739.6 889.4L742.6 887.1L744.9 887.9L744.9 890.9L743.4 893.2L740.3 894.7L738.1 894.3L738.8 891.7ZM746.1 881.8L747.6 880.2L749.5 880.6L748.7 882.1L751.8 882.5L751.4 884.8L753.3 887.9L755.6 890.9L756.7 893.2L754.8 895.5L752.5 895.8L750.2 894.7L748.7 896.2L746.1 897.8L747.2 895.5L748.3 893.2L748.0 890.1L748.7 887.9L747.2 886.3L747.6 884.0L746.1 883.3ZM731.2 906.5L734.3 907.6L738.1 906.9L741.9 909.2L741.1 912.2L738.1 913.7L735.8 912.6L734.3 910.7L733.5 908.4ZM791.4 864.3L793.6 863.3L796.7 865.0L797.4 867.3L800.5 865.4L804.6 866.3L809.1 868.2L812.9 870.5L815.2 871.6L815.6 875.0L818.3 877.7L819.8 878.8L818.7 879.4L815.2 876.5L812.6 874.6L809.9 875.0L807.6 876.5L804.6 875.4L802.7 873.5L801.9 871.2L800.5 870.0L797.4 869.2L794.4 867.3ZM818.7 868.5L820.9 865.5L823.6 864.4L826.3 865.9L828.2 866.3L828.5 868.9L830.8 869.7L832.7 871.2L836.5 871.2L839.6 873.5L837.3 875.4L833.5 876.2L830.5 875.4L832.0 873.5L828.9 872.7L825.1 872.4L822.5 870.5L821.3 868.5ZM810.0 887.9L811.4 887.2L811.8 884.9L814.5 883.8L819.0 882.6L823.6 881.9L827.4 881.5L830.5 880.0L833.5 878.1L835.8 876.5L838.1 877.3L841.1 879.6L844.2 879.2L847.2 879.2L849.5 880.7L851.0 883.4L849.5 884.9L847.2 886.8L844.9 888.7L841.9 889.9L839.2 890.9L842.6 889.9L845.7 888.7L849.5 888.3L853.3 888.7L857.9 888.7L860.9 890.6L865.1 890.6L865.8 888.7L871.6 888.7L873.8 890.6L873.8 893.7L876.9 897.1L879.2 894.4L883.7 894.4L888.3 894.8L889.8 893.3L891.4 891.0L895.2 891.8L898.2 892.9L901.2 892.5L905.1 894.0L907.3 896.3L910.0 896.7M885.3 883.8L888.3 881.1L891.4 881.9L895.9 881.7L897.1 883.4L894.4 884.9L894.0 886.1L890.6 885.7L888.3 886.4L886.4 885.3ZM980.4 950.0L979.0 945.6L977.5 942.7L975.6 937.9L974.6 933.0L972.2 929.1L970.3 924.3L971.7 920.4L973.2 914.6L971.7 909.3L968.8 904.9L966.9 901.5L967.3 898.1L966.9 893.8L963.0 892.8L961.0 890.4L955.2 890.4L951.4 892.3L945.5 892.8L940.7 892.8L935.9 889.9L932.9 886.5L930.5 883.1L928.6 880.2L928.6 875.9L929.1 871.0L928.6 866.2L931.0 862.3L933.9 858.4L937.8 854.5L938.3 851.6L940.7 848.2L944.6 844.4L950.4 843.9L956.2 842.4L963.0 841.9L969.3 842.1L969.8 846.8L968.8 848.2L973.6 849.7L977.5 852.1L981.4 853.6L983.3 850.2L986.2 849.2L991.1 851.1L995.9 852.6L1000.8 851.6L1004.2 853.1L1004.7 857.4L1006.1 862.3L1008.5 868.1L1011.4 872.9L1015.3 878.3L1018.2 882.6L1018.7 885.5L1023.1 883.6L1029.4 882.2L1028.9 886.0L1026.0 892.3L1021.1 897.2L1016.3 901.0L1012.4 904.9L1010.5 909.3L1011.9 914.6L1013.4 917.5L1012.9 922.4L1009.5 926.2L1005.6 929.6L1004.2 933.0L1004.7 936.9L1001.7 940.8L1000.8 944.7L996.9 948.5L995.0 950.0M1000.3 900.6L1002.7 899.3L1003.7 901.0L1001.7 904.0L1000.3 903.0ZM1026.0 918.0L1027.4 920.4L1027.9 923.3L1026.5 927.2L1025.0 932.1L1023.5 936.9L1021.1 939.3L1018.7 938.8L1017.7 934.0L1018.7 929.1L1018.2 925.8L1021.6 924.3L1023.5 921.4ZM910.0 896.7L914.5 895.2L918.4 896.2L919.4 899.1L924.2 899.6L930.0 899.6L933.9 901.5L936.8 899.1L942.6 898.1L947.5 900.6L952.3 903.0L957.2 905.9L960.1 906.9L964.0 907.8L962.0 910.3L959.1 912.2L955.7 910.3L951.4 908.8L947.5 911.7L944.1 912.2L947.5 913.6L948.4 916.6L944.6 917.5L940.7 919.5L936.8 920.4L932.9 922.4L928.1 923.3L923.7 925.3L922.8 928.2L924.2 931.1L922.8 934.5L920.3 935.9L918.4 938.8L917.4 941.7L917.0 945.6L918.4 950.0M900.0 924.3L903.9 923.3L907.8 925.3L910.7 925.3L912.6 922.4L915.5 919.9L919.4 919.5L922.3 920.4L925.2 917.5L927.1 917.0L926.2 919.5L923.3 922.4L920.8 925.3L917.4 927.2L914.5 929.1L913.1 932.1L914.5 935.9L914.5 939.8L916.5 941.7M917.9 944.7L921.3 940.8L926.2 938.8L931.0 935.9L933.9 933.0L937.8 930.1L940.7 931.1L942.6 927.2L946.5 926.2L950.4 926.2L951.8 930.6L954.3 933.0L957.7 935.4L959.1 931.1L959.6 926.7L961.0 925.3L963.0 929.1L965.9 933.0L967.8 936.9L970.7 941.7L974.6 945.6L977.5 950.0M994.9 949.9L993.4 951.0L988.5 952.5L983.7 953.4L981.3 952.9L980.4 949.9M976.9 948.1L977.4 952.9L975.9 957.8L973.0 961.7L971.1 966.5L967.2 968.4L963.3 969.4L959.5 968.0L957.0 965.1L955.1 962.2L953.2 959.7L951.2 961.7L947.8 957.8L943.0 956.3L938.1 957.8L933.3 960.2L928.4 961.7L923.6 962.6L921.7 962.6L920.7 958.8L919.2 952.9L917.3 947.1L917.9 944.7M963.8 972.8L966.7 971.8L969.6 972.8L969.1 976.2L966.7 978.6L964.8 976.2ZM900.0 924.3L894.3 924.4L889.7 928.0L886.1 931.0L883.5 933.9L885.4 935.9L887.7 936.9L889.7 935.2L891.7 935.9L892.0 939.8L891.0 943.8L889.1 947.1L886.4 951.0L883.1 954.3L879.9 956.9L875.9 958.2L874.6 961.5L871.3 963.5L873.3 965.5L874.6 968.1L873.9 970.7L870.0 971.7M893.0 934.6L894.3 933.6L896.0 937.9L896.6 943.1L894.7 945.8L893.7 951.0L892.0 951.0L892.7 945.8L891.7 943.8L892.7 939.8L892.4 936.6ZM893.0 952.0L895.0 952.7L898.3 954.0L896.3 955.3L893.0 956.3L893.3 959.6L893.0 962.8L891.7 966.1L889.7 968.1L885.1 970.1L880.5 972.1L877.2 974.0L876.2 975.7L874.6 972.7L878.5 970.7L882.5 968.1L885.8 965.5L889.1 962.8L890.4 960.2L891.0 956.9L892.4 954.3ZM886.8 990.5L888.7 988.2L895.6 988.0L897.6 990.1L904.2 990.8L912.7 990.5L920.0 990.1L925.9 990.5L931.8 989.1L935.7 987.2L933.1 989.8L925.9 993.1L920.6 997.7L893.0 997.7ZM890.4 987.8L891.0 974.0L894.3 973.7L898.9 974.0L900.9 977.3L900.6 982.6L900.2 989.8M898.3 974.7L898.6 989.8M894.3 973.7L894.7 967.4L898.9 967.1L900.9 970.1L902.9 974.0L906.8 976.0L910.8 979.3M902.9 964.2L904.2 958.9L906.8 958.2L909.4 958.6L911.1 962.2L912.1 966.8L912.7 970.7L909.4 968.1L905.5 965.5ZM914.0 968.1L914.4 964.5L919.3 964.2L920.6 966.8L922.6 970.1L929.2 977.3L935.7 987.2M917.3 971.4L926.5 980.6M914.7 979.3L920.0 981.3L923.9 983.9M904.2 989.1L906.2 989.1L906.2 991.8L904.2 991.8ZM908.8 989.1L912.7 989.1L912.7 991.8L908.8 991.8ZM914.7 987.2L917.3 987.2L917.3 991.1L914.7 991.1ZM921.3 985.9L922.6 989.8M926.5 985.9L929.2 989.8M929.8 983.9L932.4 988.5M551.7 940.0L547.1 942.0L545.7 945.9L546.6 948.8L551.0 949.7L547.1 949.2L544.2 951.7L543.7 955.5L543.3 960.4L541.8 964.3L543.3 968.1L541.3 972.0L537.9 976.9L537.4 981.7L539.4 987.5L540.8 992.4L539.9 997.2L540.3 1002.1L542.3 1004.0L548.1 1004.0L552.9 1003.0L556.8 1001.1L560.7 1001.6L562.6 998.7L565.5 998.2L565.5 1001.6L568.4 1004.5L572.3 1005.9L578.1 1004.0L583.0 1005.0L587.8 1005.4L593.6 1003.5L599.5 1001.6L602.4 1001.1L600.4 998.2L602.8 1000.1L603.3 997.2L605.3 994.3L607.2 992.4L609.1 992.4L606.2 990.4L604.3 987.5L603.3 983.6L604.3 977.8L602.8 973.0L601.9 971.0M568.2 940.0L570.4 943.9L572.8 948.8L574.3 953.6L576.7 958.4L579.1 962.3L583.0 963.3L587.8 963.8L592.7 967.2L597.5 970.1L601.4 971.5M581.7 940.0L582.0 943.9L584.9 948.8L587.8 952.6L590.7 954.6L593.6 958.4L597.5 962.3L601.4 966.2L605.3 969.1L608.2 972.0L609.1 975.9L612.1 978.8L615.9 980.7L619.8 982.2L624.7 982.7L627.6 981.7L630.5 984.6L634.3 986.6L638.2 989.5L641.1 992.4L645.0 994.8L646.9 995.3L646.9 992.4L645.0 991.4L642.1 989.5L641.6 985.6L640.2 983.6L636.3 982.7L634.8 979.8L636.3 976.9L636.3 974.4L631.4 974.4L630.5 977.8L626.6 978.8L622.7 976.9L620.8 973.0L620.3 968.1L621.7 963.3L624.7 960.9L629.5 961.4L633.4 959.9L638.2 959.4L642.1 960.9L644.0 964.3L646.0 968.1L646.9 965.2L645.0 960.4L646.0 955.5L649.8 951.7L651.8 947.8L652.8 943.9L655.7 942.0L660.0 940.5M596.1 958.4L598.5 959.4L601.4 964.3L603.3 969.1L602.4 971.0L599.5 967.2L597.0 962.3ZM629.5 930.8L632.9 928.4L636.3 927.4L639.7 929.9L641.1 933.3L644.0 932.3L646.9 934.2L647.9 937.1L652.8 935.7L647.9 939.1L643.5 940.0L642.1 936.2L639.7 934.7L637.7 935.2L637.7 939.1L635.8 939.1L635.8 934.2L633.4 931.8ZM647.4 980.7L649.4 981.2L648.9 982.2ZM642.6 916.0L644.5 919.7L646.9 922.1L649.8 920.7L648.9 916.8L650.8 912.9L652.3 910.0M640.2 972.5L643.1 971.0L647.9 972.5L653.7 975.9L650.0 972.7L654.8 975.1L659.7 976.6L664.5 978.5L659.7 979.9L655.8 978.5L650.0 976.6L646.0 974.0L641.1 973.5ZM677.6 916.0L681.0 917.4L682.0 921.3L679.1 923.3L675.2 925.2L669.4 925.7L664.5 926.2L660.7 928.1L661.1 930.0L664.5 928.1L668.4 929.1L670.3 932.0L673.3 933.4L669.4 933.9L666.5 934.9L663.6 936.8L660.7 938.8L660.0 940.5M677.6 929.1L681.0 923.3L683.4 925.7L686.3 926.6L687.3 931.0L682.9 930.0ZM651.9 960.6L654.8 957.2L658.7 953.3L661.6 950.4L663.6 945.5L662.6 942.6L664.5 942.6L667.0 945.5L669.4 947.5L667.0 950.4L664.5 952.8L661.6 956.2L658.7 960.1L656.8 962.0L653.9 961.5ZM700.0 908.4L699.4 913.6L696.5 915.5L692.6 917.4L690.7 919.4L691.7 922.3L692.6 925.2L695.5 927.1L697.5 925.2L698.4 923.3L700.4 926.2L700.9 930.0L702.8 931.0L706.2 929.1L708.1 926.2L709.1 923.3L708.1 920.3L710.1 917.4L713.0 915.5L714.9 912.6L715.9 909.7L718.8 909.7L720.3 911.1L717.8 914.5L714.9 916.5L714.0 919.4L715.9 921.8L719.8 923.3L724.6 922.3L727.0 923.3L721.7 923.7L717.8 924.2L718.3 927.1L716.9 930.0L714.0 931.0L713.0 933.9L709.1 934.4L706.2 935.4L702.8 936.3L700.4 933.9L699.4 931.0L697.5 929.6L695.5 931.0L696.0 933.4L698.4 934.1L700.4 933.9M696.0 933.4L692.6 935.9L689.7 938.8L686.8 940.7L683.9 943.6L680.0 945.5L677.1 946.5L678.6 948.4L681.0 951.4L681.5 954.3L679.1 956.2L674.2 955.7L669.4 956.2L668.9 960.1L669.4 963.0L668.9 965.9L671.3 967.8L676.2 968.3L680.0 966.9L682.0 964.0L683.9 961.0L686.8 958.1L688.8 955.7L693.6 955.2L697.5 954.3L698.9 956.7M700.4 952.8L701.8 951.2L705.7 954.7L709.6 958.1L710.9 960.6L709.6 962.0L708.1 960.6L706.7 963.5L704.3 960.6L701.4 957.2ZM710.9 960.6L712.0 963.0L714.4 965.9L716.9 967.3L716.4 963.0L717.8 961.0L721.7 960.6L722.2 962.0L722.7 964.9L724.6 967.3L726.6 969.3L728.5 967.8L732.4 967.8L736.2 967.3L735.8 971.7L734.3 976.6L734.8 981.4L737.2 985.3L740.1 990.1L742.1 995.0L745.4 999.8L747.4 1005.1L750.8 1004.7L756.6 1001.7L762.4 998.8L767.2 995.0L771.1 991.1L769.2 988.2L765.3 985.3L762.4 987.2L758.5 987.2L756.6 984.3L754.7 980.4L755.6 978.5L758.5 981.4L761.4 983.3L765.3 984.3L770.2 985.8L775.0 986.2L779.8 985.8L783.7 988.2L786.6 991.1L790.0 993.0M721.7 960.6L723.6 958.1L725.1 955.2L727.5 951.4L731.4 949.9L734.3 951.4L737.2 949.9L740.6 949.4L739.1 952.3L742.1 954.3L744.5 957.2L743.0 959.6L739.1 960.1L735.3 958.6L731.4 959.1L727.5 960.6L724.6 961.0L722.2 962.0M695.5 957.7L697.5 960.1L696.5 963.0L698.4 964.9L700.4 966.9L699.9 968.8L697.5 966.9L695.1 964.4L694.1 961.0ZM751.7 953.3L754.7 950.4L760.5 948.9L762.4 951.4L761.4 953.3L757.6 953.3L756.6 955.2L759.5 957.2L762.9 958.1L763.9 960.6L761.4 962.0L762.4 964.9L762.4 967.3L759.5 968.3L756.6 966.9L755.1 964.0L756.1 961.0L754.7 957.2ZM790.0 993.0L791.3 996.1L792.1 999.9L793.6 1003.7L795.1 1007.5L796.3 1011.4L797.8 1012.5L799.7 1011.0L800.8 1008.3L801.2 1004.5L802.0 1001.1L805.0 999.2L808.1 996.1L811.1 993.1L813.8 991.6L816.1 991.2L817.2 989.3L819.1 991.9L821.0 995.4L822.5 997.6L822.9 1000.3L826.0 999.9L826.7 998.8L827.9 1001.8L828.6 1005.3L829.0 1009.8L829.4 1012.5L830.9 1014.4L831.7 1017.4L832.4 1019.7L834.3 1021.6L836.6 1023.5L837.4 1021.2L836.2 1018.2L834.7 1015.9L832.4 1014.4L830.9 1011.4L830.5 1008.3L830.9 1006.0L832.4 1004.5L834.7 1006.4L837.0 1008.3L838.9 1009.4L838.5 1011.4L840.8 1009.8L843.1 1008.3L845.0 1006.8L845.4 1003.7L844.2 1001.5L842.3 999.6L840.4 997.6L838.9 996.1L841.2 993.8L843.8 991.6L845.0 993.5L847.6 991.9L850.7 990.8L852.2 990.0L854.5 990.8L856.8 988.9L859.1 987.4L860.6 985.5L861.4 982.8L863.3 980.9L863.3 978.6L862.1 976.3L862.1 973.3L861.0 971.4L859.4 970.2L861.0 968.3L864.0 967.2L864.4 966.4L860.6 966.1L858.3 964.9L857.5 963.8L859.8 962.3L862.1 961.9L863.3 960.3L864.8 961.9L867.4 962.3L868.2 964.9L869.7 966.1L870.5 968.7L871.2 971.0M853.7 993.1L857.2 992.3L856.4 995.0L854.9 994.2ZM854.9 1001.8L856.4 1001.5L857.5 1004.5L857.2 1007.5L856.0 1008.3L854.9 1006.0ZM652.3 910.0L652.0 906.6L650.7 902.8L650.1 900.6L653.3 898.9" fill="none" stroke="#2a2a2a" stroke-width="1.15" stroke-linejoin="round"/></svg>
</body></html>
